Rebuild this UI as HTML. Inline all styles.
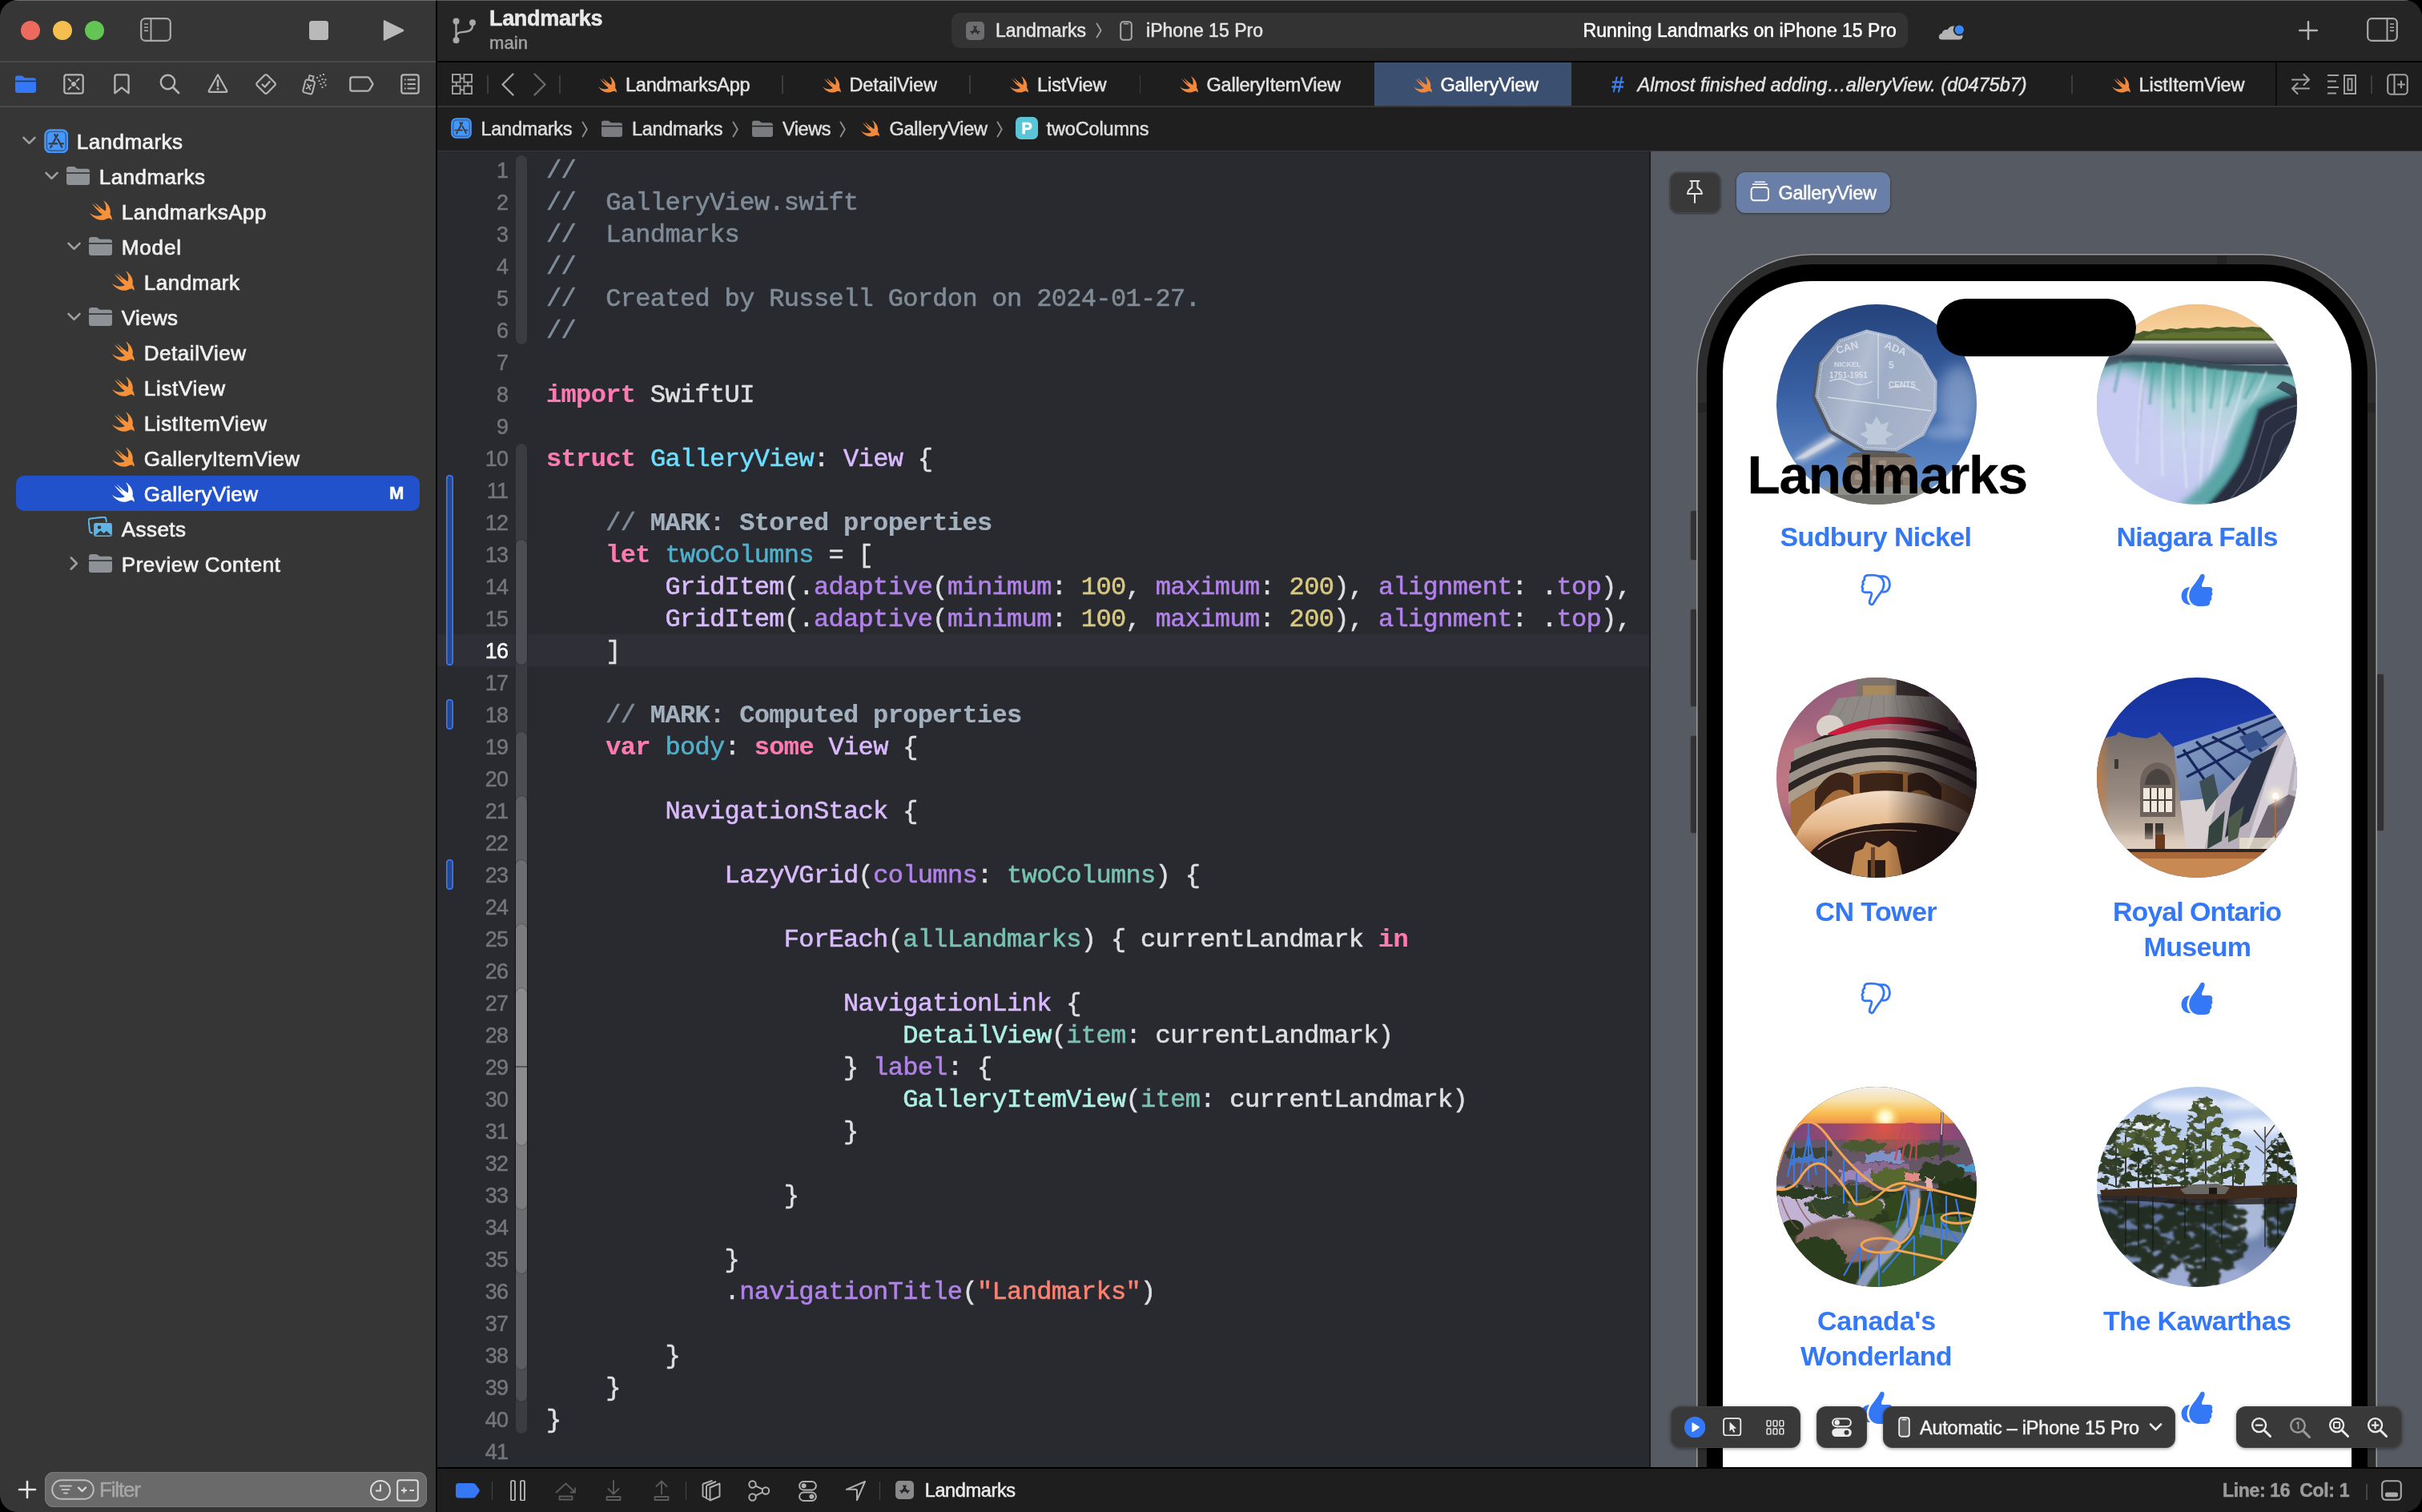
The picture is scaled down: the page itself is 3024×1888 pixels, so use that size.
<!DOCTYPE html>
<html lang="en"><head><meta charset="utf-8"><title>Landmarks — GalleryView.swift</title>
<style>
html,body{margin:0;padding:0;background:#000;}
body{width:3024px;height:1888px;overflow:hidden;font-family:"Liberation Sans",sans-serif;}
#win{position:absolute;left:0;top:0;width:3024px;height:1888px;border-radius:22px;overflow:hidden;background:#1e1e1f;}
#ly{position:absolute;left:0;top:0;width:3024px;height:1888px;will-change:transform;}
.b{position:absolute;display:block;}
.t{position:absolute;white-space:pre;display:block;-webkit-text-stroke:0.5px;}
.code{position:absolute;white-space:pre;font-family:"Liberation Mono",monospace;font-size:32px;letter-spacing:-0.653px;line-height:40px;height:40px;left:682px;color:#dfdfe0;-webkit-text-stroke:0.55px;}
.ln{position:absolute;white-space:pre;text-align:right;width:80px;left:554px;font-size:27px;line-height:40px;height:40px;color:#75757a;letter-spacing:-0.9px;-webkit-text-stroke:0.5px;}
.k{color:#ff7ab2;font-weight:700;-webkit-text-stroke:0.2px}.c{color:#7f8c98}.mk{color:#a3b1bf;font-weight:700;-webkit-text-stroke:0.2px}.td{color:#6bdfff}.od{color:#4eb0cc}
.sc{color:#dabaff}.sf{color:#b281eb}.n{color:#d9c97c}.s{color:#ff8170}.pc{color:#acf2e4}.pv{color:#78c2b3}
</style></head>
<body><div id="win"><div id="ly">
<!-- p_base -->
<div class="b" style="left:0px;top:0px;width:544px;height:1888px;background:#363636;"></div>
<div class="b" style="left:544px;top:0px;width:2px;height:1888px;background:#000;"></div>
<div class="b" style="left:0px;top:76px;width:544px;height:2px;background:#4b4b4b;"></div>
<div class="b" style="left:0px;top:132px;width:544px;height:2px;background:#4b4b4b;"></div>
<div class="b" style="left:546px;top:0px;width:2478px;height:77px;background:#252526;"></div>
<div class="b" style="left:546px;top:76px;width:2478px;height:2px;background:#000;"></div>
<div class="b" style="left:546px;top:78px;width:2478px;height:55px;background:#1e1e1f;"></div>
<div class="b" style="left:546px;top:132px;width:2478px;height:2px;background:#353537;"></div>
<div class="b" style="left:546px;top:134px;width:2478px;height:54px;background:#1f1f20;"></div>
<div class="b" style="left:546px;top:188px;width:2478px;height:1px;background:#38383b;"></div>
<div class="b" style="left:546px;top:189px;width:1513px;height:1644px;background:#292a30;"></div>
<div class="b" style="left:2059px;top:189px;width:2px;height:1644px;background:#1b1b1d;"></div>
<div class="b" style="left:2061px;top:189px;width:963px;height:1644px;background:#565a63;"></div>
<div class="b" style="left:546px;top:1832px;width:2478px;height:2px;background:#000;"></div>
<div class="b" style="left:546px;top:1834px;width:2478px;height:54px;background:#1e1e1f;"></div>
<div class="b" style="left:0px;top:0px;width:3024px;height:1px;background:rgba(255,255,255,0.28);"></div>
<!-- p_sidebar -->
<div class="b" style="left:26px;top:26px;width:24px;height:24px;background:#ed6a5f;border-radius:12px;"></div>
<div class="b" style="left:66px;top:26px;width:24px;height:24px;background:#f5bf4f;border-radius:12px;"></div>
<div class="b" style="left:106px;top:26px;width:24px;height:24px;background:#62c554;border-radius:12px;"></div>
<svg class="b" style="left:175px;top:22px;" width="39" height="30" viewBox="0 0 39 30"><rect x="1.2" y="1.2" width="36.6" height="27.6" rx="5" fill="none" stroke="#a9a9a9" stroke-width="2.2"/><path d="M13.5 1.5V28.5" stroke="#a9a9a9" stroke-width="2"/><path d="M5 8H10M5 12.2H10M5 16.4H10" stroke="#a9a9a9" stroke-width="1.6"/></svg>
<div class="b" style="left:386px;top:26px;width:24px;height:24px;background:#b9b9b9;border-radius:3.5px;"></div>
<svg class="b" style="left:478px;top:24px;" width="28" height="28" viewBox="0 0 28 28"><path d="M2.5 1.5Q0.8 0.6 0.8 2.5V25.5Q0.8 27.4 2.5 26.5L25.6 15.2Q27.2 14 25.6 12.8Z" fill="#b9b9b9"/></svg>
<svg class="b" style="left:19px;top:94px;" width="26" height="22" viewBox="0 0 26 22"><path d="M0 4Q0 0.6 3 0.6H7.4Q9 0.6 10 1.6L10.8 2.4Q11.7 3.2 13 3.2H23Q26 3.2 26 6.2V19Q26 22 23 22H3Q0 22 0 19Z" fill="#3478f6"/><rect x="0" y="6.6" width="26" height="1.6" fill="#363636"/></svg>
<svg class="b" style="left:79px;top:92px;" width="26" height="26" viewBox="0 0 26 26"><rect x="1.3" y="1.3" width="23.4" height="23.4" rx="3" fill="none" stroke="#b4b4b4" stroke-width="2.2"/><circle cx="13" cy="13" r="3" fill="#b4b4b4"/><path d="M6.5 6.5L9.3 9.3M19.5 6.5L16.7 9.3M6.5 19.5L9.3 16.7M19.5 19.5L16.7 16.7" stroke="#b4b4b4" stroke-width="2" stroke-linecap="round"/></svg>
<svg class="b" style="left:142px;top:92px;" width="20" height="26" viewBox="0 0 20 26"><path d="M1.4 3.8Q1.4 1.3 3.9 1.3H16.1Q18.6 1.3 18.6 3.8V24.3L10 17.4L1.4 24.3Z" fill="none" stroke="#b4b4b4" stroke-width="2.3" stroke-linejoin="round"/></svg>
<svg class="b" style="left:199px;top:92px;" width="26" height="26" viewBox="0 0 26 26"><circle cx="10.5" cy="10.5" r="8.7" fill="none" stroke="#b4b4b4" stroke-width="2.4"/><path d="M17 17L24 24" stroke="#b4b4b4" stroke-width="2.8" stroke-linecap="round"/></svg>
<svg class="b" style="left:259px;top:91px;" width="26" height="26" viewBox="0 0 26 26"><path d="M13 2.3L24.2 22.3Q24.8 23.8 23.2 23.8H2.8Q1.2 23.8 1.8 22.3Z" fill="none" stroke="#b4b4b4" stroke-width="2.2" stroke-linejoin="round"/><path d="M13 9.5V16.5" stroke="#b4b4b4" stroke-width="2.6" stroke-linecap="round"/><circle cx="13" cy="20" r="1.5" fill="#b4b4b4"/></svg>
<svg class="b" style="left:318px;top:91px;" width="28" height="28" viewBox="0 0 28 28"><rect x="5" y="5" width="18" height="18" rx="2.5" fill="none" stroke="#b4b4b4" stroke-width="2.2" transform="rotate(45 14 14)"/><path d="M9.5 14.5L12.8 17.6L18.6 11" fill="none" stroke="#b4b4b4" stroke-width="2.3" stroke-linecap="round" stroke-linejoin="round"/></svg>
<svg class="b" style="left:377px;top:91px;" width="31" height="28" viewBox="0 0 31 28"><g transform="rotate(14 10 16)"><rect x="3" y="9.5" width="12" height="16.5" rx="2.5" fill="none" stroke="#b4b4b4" stroke-width="2"/><rect x="6.4" y="3.6" width="5.2" height="5.8" fill="none" stroke="#b4b4b4" stroke-width="1.8"/><path d="M6.6 15L11.4 20.4M11.4 15L6.6 20.4" stroke="#b4b4b4" stroke-width="1.8" stroke-linecap="round"/></g><rect x="18" y="5" width="2" height="2" fill="#b4b4b4"/><rect x="22" y="2.5" width="2" height="2" fill="#b4b4b4"/><rect x="26" y="1" width="2" height="2" fill="#b4b4b4"/><rect x="20.5" y="9" width="2" height="2" fill="#b4b4b4"/><rect x="24.5" y="7" width="2" height="2" fill="#b4b4b4"/><rect x="28.5" y="7.5" width="2" height="2" fill="#b4b4b4"/><rect x="22.5" y="13" width="2" height="2" fill="#b4b4b4"/><rect x="26.5" y="11" width="2" height="2" fill="#b4b4b4"/><rect x="28.5" y="14.5" width="2" height="2" fill="#b4b4b4"/><rect x="24.5" y="17" width="2" height="2" fill="#b4b4b4"/></svg>
<svg class="b" style="left:436px;top:95px;" width="31" height="20" viewBox="0 0 31 20"><path d="M4 1.3H22.5Q24.3 1.3 25.3 2.8L29 8.8Q29.8 10 29 11.2L25.3 17.2Q24.3 18.7 22.5 18.7H4Q1.3 18.7 1.3 16V4Q1.3 1.3 4 1.3Z" fill="none" stroke="#b4b4b4" stroke-width="2.3" stroke-linejoin="round"/></svg>
<svg class="b" style="left:500px;top:92px;" width="24" height="26" viewBox="0 0 24 26"><rect x="1.3" y="1.3" width="21.4" height="23.4" rx="3" fill="none" stroke="#b4b4b4" stroke-width="2.2"/><path d="M9.5 7.5H18M9.5 13H18M9.5 18.5H18" stroke="#b4b4b4" stroke-width="2.2" stroke-linecap="round"/><path d="M5 7.5H6.6M5 13H6.6M5 18.5H6.6" stroke="#b4b4b4" stroke-width="2.2"/></svg>
<svg class="b" style="left:28px;top:170px;" width="17" height="11" viewBox="0 0 17 11"><path d="M1.5 1.8L8.5 8.8L15.5 1.8" fill="none" stroke="#a0a0a0" stroke-width="2.6" stroke-linecap="round" stroke-linejoin="round"/></svg>
<svg class="b" style="left:54.5px;top:160.7px;" width="30.6" height="30.6" viewBox="0 0 30 30"><rect x="0.2" y="0.2" width="29.6" height="29.6" rx="7.6" fill="#4398ff"/><rect x="3.3" y="3.3" width="23.4" height="23.4" rx="4.6" fill="none" stroke="#38598a" stroke-width="1.4"/><g stroke="#3a3a3d" stroke-width="2.2" stroke-linecap="round" fill="none"><path d="M16.6 7L10.9 17.6M9.4 20.6L8 22.6M13 7L14.6 9.6M16.8 12.6L21.9 22.4M6.4 18H16M20.2 18H23.6"/></g></svg>
<span class="t" style="left:95.8px;top:158.8px;font-size:26px;line-height:36px;color:#f0f0f0;letter-spacing:0.453px;-webkit-text-stroke:0.7px;">Landmarks</span>
<svg class="b" style="left:56px;top:214px;" width="17" height="11" viewBox="0 0 17 11"><path d="M1.5 1.8L8.5 8.8L15.5 1.8" fill="none" stroke="#a0a0a0" stroke-width="2.6" stroke-linecap="round" stroke-linejoin="round"/></svg>
<svg class="b" style="left:83px;top:207px;" width="29" height="24" viewBox="0 0 29 24"><path d="M0 4.2Q0 1 3.2 1H8.6Q10.4 1 11.4 2.1L12.3 3Q13.2 3.8 14.6 3.8H25.8Q29 3.8 29 7V20.8Q29 24 25.8 24H3.2Q0 24 0 20.8Z" fill="#8e9297"/><rect x="0" y="8.2" width="29" height="1.7" fill="#363636"/></svg>
<span class="t" style="left:123.8px;top:202.8px;font-size:26px;line-height:36px;color:#f0f0f0;letter-spacing:0.453px;-webkit-text-stroke:0.7px;">Landmarks</span>
<svg class="b" style="left:111px;top:250px;" width="30" height="26" viewBox="2.3 3.3 18.5 17"><path d="M13.543 3.41c4.114 2.47 6.545 7.162 5.549 11.131-.024.093-.05.181-.076.272l.002.001c2.062 2.538 1.5 5.258 1.236 4.745-1.072-2.086-3.066-1.568-4.088-1.043a6.803 6.803 0 0 1-.281.158l-.02.012-.002.002c-2.115 1.123-4.957 1.205-7.812-.022a12.568 12.568 0 0 1-5.64-4.838c.649.48 1.35.902 2.097 1.252 3.019 1.414 6.051 1.311 8.197-.002C9.651 12.73 7.101 9.67 5.146 7.191a10.628 10.628 0 0 1-1.005-1.384c2.34 2.142 6.038 4.83 7.365 5.576C8.69 8.408 6.208 4.743 6.324 4.86c4.436 4.47 8.528 6.996 8.528 6.996.154.085.27.154.36.213.085-.215.16-.437.224-.668.708-2.588-.09-5.548-1.893-7.992z" fill="#f6923a"/></svg>
<span class="t" style="left:151.8px;top:246.8px;font-size:26px;line-height:36px;color:#f0f0f0;letter-spacing:0.534px;-webkit-text-stroke:0.7px;">LandmarksApp</span>
<svg class="b" style="left:84px;top:302px;" width="17" height="11" viewBox="0 0 17 11"><path d="M1.5 1.8L8.5 8.8L15.5 1.8" fill="none" stroke="#a0a0a0" stroke-width="2.6" stroke-linecap="round" stroke-linejoin="round"/></svg>
<svg class="b" style="left:111px;top:295px;" width="29" height="24" viewBox="0 0 29 24"><path d="M0 4.2Q0 1 3.2 1H8.6Q10.4 1 11.4 2.1L12.3 3Q13.2 3.8 14.6 3.8H25.8Q29 3.8 29 7V20.8Q29 24 25.8 24H3.2Q0 24 0 20.8Z" fill="#8e9297"/><rect x="0" y="8.2" width="29" height="1.7" fill="#363636"/></svg>
<span class="t" style="left:151.8px;top:290.8px;font-size:26px;line-height:36px;color:#f0f0f0;letter-spacing:0.851px;-webkit-text-stroke:0.7px;">Model</span>
<svg class="b" style="left:139px;top:338px;" width="30" height="26" viewBox="2.3 3.3 18.5 17"><path d="M13.543 3.41c4.114 2.47 6.545 7.162 5.549 11.131-.024.093-.05.181-.076.272l.002.001c2.062 2.538 1.5 5.258 1.236 4.745-1.072-2.086-3.066-1.568-4.088-1.043a6.803 6.803 0 0 1-.281.158l-.02.012-.002.002c-2.115 1.123-4.957 1.205-7.812-.022a12.568 12.568 0 0 1-5.64-4.838c.649.48 1.35.902 2.097 1.252 3.019 1.414 6.051 1.311 8.197-.002C9.651 12.73 7.101 9.67 5.146 7.191a10.628 10.628 0 0 1-1.005-1.384c2.34 2.142 6.038 4.83 7.365 5.576C8.69 8.408 6.208 4.743 6.324 4.86c4.436 4.47 8.528 6.996 8.528 6.996.154.085.27.154.36.213.085-.215.16-.437.224-.668.708-2.588-.09-5.548-1.893-7.992z" fill="#f6923a"/></svg>
<span class="t" style="left:179.8px;top:334.8px;font-size:26px;line-height:36px;color:#f0f0f0;letter-spacing:0.517px;-webkit-text-stroke:0.7px;">Landmark</span>
<svg class="b" style="left:84px;top:390px;" width="17" height="11" viewBox="0 0 17 11"><path d="M1.5 1.8L8.5 8.8L15.5 1.8" fill="none" stroke="#a0a0a0" stroke-width="2.6" stroke-linecap="round" stroke-linejoin="round"/></svg>
<svg class="b" style="left:111px;top:383px;" width="29" height="24" viewBox="0 0 29 24"><path d="M0 4.2Q0 1 3.2 1H8.6Q10.4 1 11.4 2.1L12.3 3Q13.2 3.8 14.6 3.8H25.8Q29 3.8 29 7V20.8Q29 24 25.8 24H3.2Q0 24 0 20.8Z" fill="#8e9297"/><rect x="0" y="8.2" width="29" height="1.7" fill="#363636"/></svg>
<span class="t" style="left:151.8px;top:378.8px;font-size:26px;line-height:36px;color:#f0f0f0;letter-spacing:0.327px;-webkit-text-stroke:0.7px;">Views</span>
<svg class="b" style="left:139px;top:426px;" width="30" height="26" viewBox="2.3 3.3 18.5 17"><path d="M13.543 3.41c4.114 2.47 6.545 7.162 5.549 11.131-.024.093-.05.181-.076.272l.002.001c2.062 2.538 1.5 5.258 1.236 4.745-1.072-2.086-3.066-1.568-4.088-1.043a6.803 6.803 0 0 1-.281.158l-.02.012-.002.002c-2.115 1.123-4.957 1.205-7.812-.022a12.568 12.568 0 0 1-5.64-4.838c.649.48 1.35.902 2.097 1.252 3.019 1.414 6.051 1.311 8.197-.002C9.651 12.73 7.101 9.67 5.146 7.191a10.628 10.628 0 0 1-1.005-1.384c2.34 2.142 6.038 4.83 7.365 5.576C8.69 8.408 6.208 4.743 6.324 4.86c4.436 4.47 8.528 6.996 8.528 6.996.154.085.27.154.36.213.085-.215.16-.437.224-.668.708-2.588-.09-5.548-1.893-7.992z" fill="#f6923a"/></svg>
<span class="t" style="left:179.8px;top:422.8px;font-size:26px;line-height:36px;color:#f0f0f0;letter-spacing:0.538px;-webkit-text-stroke:0.7px;">DetailView</span>
<svg class="b" style="left:139px;top:470px;" width="30" height="26" viewBox="2.3 3.3 18.5 17"><path d="M13.543 3.41c4.114 2.47 6.545 7.162 5.549 11.131-.024.093-.05.181-.076.272l.002.001c2.062 2.538 1.5 5.258 1.236 4.745-1.072-2.086-3.066-1.568-4.088-1.043a6.803 6.803 0 0 1-.281.158l-.02.012-.002.002c-2.115 1.123-4.957 1.205-7.812-.022a12.568 12.568 0 0 1-5.64-4.838c.649.48 1.35.902 2.097 1.252 3.019 1.414 6.051 1.311 8.197-.002C9.651 12.73 7.101 9.67 5.146 7.191a10.628 10.628 0 0 1-1.005-1.384c2.34 2.142 6.038 4.83 7.365 5.576C8.69 8.408 6.208 4.743 6.324 4.86c4.436 4.47 8.528 6.996 8.528 6.996.154.085.27.154.36.213.085-.215.16-.437.224-.668.708-2.588-.09-5.548-1.893-7.992z" fill="#f6923a"/></svg>
<span class="t" style="left:179.8px;top:466.8px;font-size:26px;line-height:36px;color:#f0f0f0;letter-spacing:0.694px;-webkit-text-stroke:0.7px;">ListView</span>
<svg class="b" style="left:139px;top:514px;" width="30" height="26" viewBox="2.3 3.3 18.5 17"><path d="M13.543 3.41c4.114 2.47 6.545 7.162 5.549 11.131-.024.093-.05.181-.076.272l.002.001c2.062 2.538 1.5 5.258 1.236 4.745-1.072-2.086-3.066-1.568-4.088-1.043a6.803 6.803 0 0 1-.281.158l-.02.012-.002.002c-2.115 1.123-4.957 1.205-7.812-.022a12.568 12.568 0 0 1-5.64-4.838c.649.48 1.35.902 2.097 1.252 3.019 1.414 6.051 1.311 8.197-.002C9.651 12.73 7.101 9.67 5.146 7.191a10.628 10.628 0 0 1-1.005-1.384c2.34 2.142 6.038 4.83 7.365 5.576C8.69 8.408 6.208 4.743 6.324 4.86c4.436 4.47 8.528 6.996 8.528 6.996.154.085.27.154.36.213.085-.215.16-.437.224-.668.708-2.588-.09-5.548-1.893-7.992z" fill="#f6923a"/></svg>
<span class="t" style="left:179.8px;top:510.8px;font-size:26px;line-height:36px;color:#f0f0f0;letter-spacing:0.574px;-webkit-text-stroke:0.7px;">ListItemView</span>
<svg class="b" style="left:139px;top:558px;" width="30" height="26" viewBox="2.3 3.3 18.5 17"><path d="M13.543 3.41c4.114 2.47 6.545 7.162 5.549 11.131-.024.093-.05.181-.076.272l.002.001c2.062 2.538 1.5 5.258 1.236 4.745-1.072-2.086-3.066-1.568-4.088-1.043a6.803 6.803 0 0 1-.281.158l-.02.012-.002.002c-2.115 1.123-4.957 1.205-7.812-.022a12.568 12.568 0 0 1-5.64-4.838c.649.48 1.35.902 2.097 1.252 3.019 1.414 6.051 1.311 8.197-.002C9.651 12.73 7.101 9.67 5.146 7.191a10.628 10.628 0 0 1-1.005-1.384c2.34 2.142 6.038 4.83 7.365 5.576C8.69 8.408 6.208 4.743 6.324 4.86c4.436 4.47 8.528 6.996 8.528 6.996.154.085.27.154.36.213.085-.215.16-.437.224-.668.708-2.588-.09-5.548-1.893-7.992z" fill="#f6923a"/></svg>
<span class="t" style="left:179.8px;top:554.8px;font-size:26px;line-height:36px;color:#f0f0f0;letter-spacing:0.387px;-webkit-text-stroke:0.7px;">GalleryItemView</span>
<div class="b" style="left:20px;top:594px;width:504px;height:44px;background:#2251cc;border-radius:10px;"></div>
<svg class="b" style="left:139px;top:602px;" width="30" height="26" viewBox="2.3 3.3 18.5 17"><path d="M13.543 3.41c4.114 2.47 6.545 7.162 5.549 11.131-.024.093-.05.181-.076.272l.002.001c2.062 2.538 1.5 5.258 1.236 4.745-1.072-2.086-3.066-1.568-4.088-1.043a6.803 6.803 0 0 1-.281.158l-.02.012-.002.002c-2.115 1.123-4.957 1.205-7.812-.022a12.568 12.568 0 0 1-5.64-4.838c.649.48 1.35.902 2.097 1.252 3.019 1.414 6.051 1.311 8.197-.002C9.651 12.73 7.101 9.67 5.146 7.191a10.628 10.628 0 0 1-1.005-1.384c2.34 2.142 6.038 4.83 7.365 5.576C8.69 8.408 6.208 4.743 6.324 4.86c4.436 4.47 8.528 6.996 8.528 6.996.154.085.27.154.36.213.085-.215.16-.437.224-.668.708-2.588-.09-5.548-1.893-7.992z" fill="#fff"/></svg>
<span class="t" style="left:179.8px;top:598.8px;font-size:26px;line-height:36px;color:#fff;letter-spacing:0.397px;-webkit-text-stroke:0.7px;">GalleryView</span>
<svg class="b" style="left:110px;top:645px;" width="32" height="27" viewBox="0 0 32 27"><rect x="1.2" y="1.6" width="22" height="18" rx="3" fill="none" stroke="#5fb6e6" stroke-width="2" transform="rotate(-7 12 10)"/><rect x="6.5" y="7.5" width="24" height="18" rx="3" fill="#5fb6e6" stroke="#363636" stroke-width="1.2"/><circle cx="14" cy="13.5" r="2.3" fill="#363636"/><path d="M9 23.5L15.5 17.5L19.5 21L23 18L29 23.5Z" fill="#363636"/></svg>
<span class="t" style="left:151.8px;top:642.8px;font-size:26px;line-height:36px;color:#f0f0f0;letter-spacing:0.437px;-webkit-text-stroke:0.7px;">Assets</span>
<svg class="b" style="left:87px;top:695px;" width="11" height="17" viewBox="0 0 11 17"><path d="M1.8 1.5L8.8 8.5L1.8 15.5" fill="none" stroke="#a0a0a0" stroke-width="2.6" stroke-linecap="round" stroke-linejoin="round"/></svg>
<svg class="b" style="left:111px;top:691px;" width="29" height="24" viewBox="0 0 29 24"><path d="M0 4.2Q0 1 3.2 1H8.6Q10.4 1 11.4 2.1L12.3 3Q13.2 3.8 14.6 3.8H25.8Q29 3.8 29 7V20.8Q29 24 25.8 24H3.2Q0 24 0 20.8Z" fill="#8e9297"/><rect x="0" y="8.2" width="29" height="1.7" fill="#363636"/></svg>
<span class="t" style="left:151.8px;top:686.8px;font-size:26px;line-height:36px;color:#f0f0f0;letter-spacing:0.534px;-webkit-text-stroke:0.7px;">Preview Content</span>
<span class="t" style="left:486.0px;top:601.0px;font-size:22px;line-height:30px;color:#fff;font-weight:700;">M</span>
<svg class="b" style="left:22px;top:1848px;" width="24" height="24" viewBox="0 0 24 24"><path d="M12 2V22M2 12H22" stroke="#e6e6e6" stroke-width="2.6" stroke-linecap="round"/></svg>
<div class="b" style="left:56px;top:1838px;width:477px;height:44px;background:#6a6a6a;border-radius:11px;box-shadow:inset 0 0 0 1px #7a7a7a;"></div>
<svg class="b" style="left:64px;top:1847px;" width="54" height="26" viewBox="0 0 54 26"><rect x="1.2" y="1.2" width="51.6" height="23.6" rx="11.8" fill="none" stroke="#bdbdbd" stroke-width="2"/><path d="M11 8.5H25M13.5 13H22.5M16 17.5H20" stroke="#bdbdbd" stroke-width="2" stroke-linecap="round"/><path d="M34 10.5L38.5 15L43 10.5" fill="none" stroke="#d8d8d8" stroke-width="2.4" stroke-linecap="round" stroke-linejoin="round"/></svg>
<span class="t" style="left:124.0px;top:1842.0px;font-size:26px;line-height:36px;color:#a6a6a6;letter-spacing:-1.153px;">Filter</span>
<svg class="b" style="left:461px;top:1847px;" width="28" height="28" viewBox="0 0 28 28"><circle cx="14" cy="14" r="12" fill="none" stroke="#dcdcdc" stroke-width="2"/><path d="M14 6.5V14.5H8" fill="none" stroke="#dcdcdc" stroke-width="2"/></svg>
<svg class="b" style="left:495px;top:1847px;" width="28" height="28" viewBox="0 0 28 28"><rect x="1.2" y="1.2" width="25.6" height="25.6" rx="3" fill="none" stroke="#dcdcdc" stroke-width="2"/><path d="M6 14H13M9.5 10.5V17.5M16.5 14H22" stroke="#dcdcdc" stroke-width="2"/></svg>
<!-- p_toolbar -->
<svg class="b" style="left:565px;top:22px;" width="30" height="33" viewBox="0 0 30 33"><g fill="none" stroke="#a8a8a8" stroke-width="2.4"><path d="M4.5 7V26"/><path d="M25 8.5V10Q25 16.5 17 17.5L10 18.4Q4.5 19.4 4.5 24"/></g><circle cx="4.5" cy="4.5" r="4" fill="#a8a8a8"/><circle cx="4.5" cy="28.3" r="4" fill="#a8a8a8"/><circle cx="25" cy="6.2" r="4" fill="#a8a8a8"/></svg>
<span class="t" style="left:611.0px;top:6.0px;font-size:27px;line-height:34px;color:#e9e9e9;letter-spacing:-0.320px;font-weight:700;">Landmarks</span>
<span class="t" style="left:611.0px;top:39.5px;font-size:22px;line-height:28px;color:#a3a3a3;letter-spacing:0.104px;">main</span>
<div class="b" style="left:1188px;top:16px;width:1194px;height:44px;background:#333334;border-radius:11px;"></div>
<svg class="b" style="left:1206px;top:27px;" width="23" height="23" viewBox="0 0 23 23"><rect x="0" y="0" width="23" height="23" rx="5" fill="#6d6d6f"/><g stroke="#2c2c2e" stroke-width="1.9" stroke-linecap="round" fill="none"><path d="M10.2 6.2L15 14.8M12.8 6.2L8 14.8M6.2 12.6H16.8"/></g></svg>
<span class="t" style="left:1243.0px;top:23.0px;font-size:23px;line-height:30px;color:#e4e4e4;letter-spacing:-0.100px;">Landmarks</span>
<svg class="b" style="left:1368px;top:28px;" width="9" height="20" viewBox="0 0 9 20"><path d="M1.5 1.5L6.6 10L1.5 18.5" fill="none" stroke="#9a9a9a" stroke-width="1.9" stroke-linecap="round" stroke-linejoin="round"/></svg>
<svg class="b" style="left:1398px;top:26px;" width="16" height="25" viewBox="0 0 16 25"><rect x="1.2" y="1.2" width="13.6" height="22.6" rx="3.4" fill="none" stroke="#a9a9a9" stroke-width="2"/><path d="M5.5 3.8H10.5" stroke="#a9a9a9" stroke-width="1.6" stroke-linecap="round"/></svg>
<span class="t" style="left:1431.0px;top:23.0px;font-size:23px;line-height:30px;color:#e4e4e4;letter-spacing:0.016px;">iPhone 15 Pro</span>
<span class="t" style="left:1976.5px;top:23.0px;font-size:23px;line-height:30px;color:#fff;letter-spacing:0.043px;">Running Landmarks on iPhone 15 Pro</span>
<svg class="b" style="left:2420px;top:27px;" width="36" height="24" viewBox="0 0 36 24"><path d="M8 22.5H25.5Q30.5 22.5 30.5 18Q30.5 14.6 27 13.6Q26.6 5.5 19 5.5Q14 5.5 11.8 10Q5.5 9.5 4.6 14.8Q0.8 15.6 0.8 19Q0.8 22.5 5 22.5Z" fill="#b4b4b4"/><circle cx="26.3" cy="10.2" r="7.6" fill="#252526"/><circle cx="26.3" cy="10.2" r="5.6" fill="#3a86f7"/></svg>
<svg class="b" style="left:2870px;top:26px;" width="24" height="24" viewBox="0 0 24 24"><path d="M12 1.2V22.8M1.2 12H22.8" stroke="#b4b4b4" stroke-width="2.5" stroke-linecap="round"/></svg>
<svg class="b" style="left:2954.5px;top:22px;" width="39" height="30" viewBox="0 0 39 30"><rect x="1.2" y="1.2" width="36.6" height="27.6" rx="5" fill="none" stroke="#a9a9a9" stroke-width="2.2"/><path d="M25.5 1.5V28.5" stroke="#a9a9a9" stroke-width="2"/><path d="M29 8H34M29 12.2H34M29 16.4H34" stroke="#a9a9a9" stroke-width="1.6"/></svg>
<!-- p_tabs -->
<svg class="b" style="left:564px;top:92px;" width="26" height="26" viewBox="0 0 26 26"><g fill="none" stroke="#a0a0a0" stroke-width="2" transform="scale(0.963)"><rect x="1" y="1" width="10" height="10"/><rect x="16" y="1" width="10" height="10"/><rect x="1" y="16" width="10" height="10"/><rect x="16" y="16" width="10" height="10"/><path d="M11 6H16M6 11V16M21 11V16M11 21H16"/></g></svg>
<div class="b" style="left:608.25px;top:94px;width:1.5px;height:23px;background:#3d3d3f;"></div>
<div class="b" style="left:698.25px;top:94px;width:1.5px;height:23px;background:#3d3d3f;"></div>
<svg class="b" style="left:625px;top:91px;" width="18" height="29" viewBox="0 0 18 29"><path d="M15.5 1.5L2.5 14.5L15.5 27.5" fill="none" stroke="#a6a6a6" stroke-width="2.4" stroke-linecap="round" stroke-linejoin="round"/></svg>
<svg class="b" style="left:665px;top:91px;" width="18" height="29" viewBox="0 0 18 29"><path d="M2.5 1.5L15.5 14.5L2.5 27.5" fill="none" stroke="#6b6b6b" stroke-width="2.4" stroke-linecap="round" stroke-linejoin="round"/></svg>
<div class="b" style="left:1716px;top:78px;width:246px;height:54px;background:#3b5071;"></div>
<svg class="b" style="left:745.5px;top:95px;" width="25" height="21.5" viewBox="2.3 3.3 18.5 17"><path d="M13.543 3.41c4.114 2.47 6.545 7.162 5.549 11.131-.024.093-.05.181-.076.272l.002.001c2.062 2.538 1.5 5.258 1.236 4.745-1.072-2.086-3.066-1.568-4.088-1.043a6.803 6.803 0 0 1-.281.158l-.02.012-.002.002c-2.115 1.123-4.957 1.205-7.812-.022a12.568 12.568 0 0 1-5.64-4.838c.649.48 1.35.902 2.097 1.252 3.019 1.414 6.051 1.311 8.197-.002C9.651 12.73 7.101 9.67 5.146 7.191a10.628 10.628 0 0 1-1.005-1.384c2.34 2.142 6.038 4.83 7.365 5.576C8.69 8.408 6.208 4.743 6.324 4.86c4.436 4.47 8.528 6.996 8.528 6.996.154.085.27.154.36.213.085-.215.16-.437.224-.668.708-2.588-.09-5.548-1.893-7.992z" fill="#f0883e"/></svg>
<span class="t" style="left:781.0px;top:90.5px;font-size:23.5px;line-height:30px;color:#e2e2e2;letter-spacing:-0.229px;">LandmarksApp</span>
<svg class="b" style="left:1025.5px;top:95px;" width="25" height="21.5" viewBox="2.3 3.3 18.5 17"><path d="M13.543 3.41c4.114 2.47 6.545 7.162 5.549 11.131-.024.093-.05.181-.076.272l.002.001c2.062 2.538 1.5 5.258 1.236 4.745-1.072-2.086-3.066-1.568-4.088-1.043a6.803 6.803 0 0 1-.281.158l-.02.012-.002.002c-2.115 1.123-4.957 1.205-7.812-.022a12.568 12.568 0 0 1-5.64-4.838c.649.48 1.35.902 2.097 1.252 3.019 1.414 6.051 1.311 8.197-.002C9.651 12.73 7.101 9.67 5.146 7.191a10.628 10.628 0 0 1-1.005-1.384c2.34 2.142 6.038 4.83 7.365 5.576C8.69 8.408 6.208 4.743 6.324 4.86c4.436 4.47 8.528 6.996 8.528 6.996.154.085.27.154.36.213.085-.215.16-.437.224-.668.708-2.588-.09-5.548-1.893-7.992z" fill="#f0883e"/></svg>
<span class="t" style="left:1060.5px;top:90.5px;font-size:23.5px;line-height:30px;color:#e2e2e2;letter-spacing:-0.118px;">DetailView</span>
<svg class="b" style="left:1260px;top:95px;" width="25" height="21.5" viewBox="2.3 3.3 18.5 17"><path d="M13.543 3.41c4.114 2.47 6.545 7.162 5.549 11.131-.024.093-.05.181-.076.272l.002.001c2.062 2.538 1.5 5.258 1.236 4.745-1.072-2.086-3.066-1.568-4.088-1.043a6.803 6.803 0 0 1-.281.158l-.02.012-.002.002c-2.115 1.123-4.957 1.205-7.812-.022a12.568 12.568 0 0 1-5.64-4.838c.649.48 1.35.902 2.097 1.252 3.019 1.414 6.051 1.311 8.197-.002C9.651 12.73 7.101 9.67 5.146 7.191a10.628 10.628 0 0 1-1.005-1.384c2.34 2.142 6.038 4.83 7.365 5.576C8.69 8.408 6.208 4.743 6.324 4.86c4.436 4.47 8.528 6.996 8.528 6.996.154.085.27.154.36.213.085-.215.16-.437.224-.668.708-2.588-.09-5.548-1.893-7.992z" fill="#f0883e"/></svg>
<span class="t" style="left:1295.0px;top:90.5px;font-size:23.5px;line-height:30px;color:#e2e2e2;letter-spacing:-0.080px;">ListView</span>
<svg class="b" style="left:1471.5px;top:95px;" width="25" height="21.5" viewBox="2.3 3.3 18.5 17"><path d="M13.543 3.41c4.114 2.47 6.545 7.162 5.549 11.131-.024.093-.05.181-.076.272l.002.001c2.062 2.538 1.5 5.258 1.236 4.745-1.072-2.086-3.066-1.568-4.088-1.043a6.803 6.803 0 0 1-.281.158l-.02.012-.002.002c-2.115 1.123-4.957 1.205-7.812-.022a12.568 12.568 0 0 1-5.64-4.838c.649.48 1.35.902 2.097 1.252 3.019 1.414 6.051 1.311 8.197-.002C9.651 12.73 7.101 9.67 5.146 7.191a10.628 10.628 0 0 1-1.005-1.384c2.34 2.142 6.038 4.83 7.365 5.576C8.69 8.408 6.208 4.743 6.324 4.86c4.436 4.47 8.528 6.996 8.528 6.996.154.085.27.154.36.213.085-.215.16-.437.224-.668.708-2.588-.09-5.548-1.893-7.992z" fill="#f0883e"/></svg>
<span class="t" style="left:1506.5px;top:90.5px;font-size:23.5px;line-height:30px;color:#e2e2e2;letter-spacing:-0.223px;">GalleryItemView</span>
<svg class="b" style="left:1764px;top:95px;" width="25" height="21.5" viewBox="2.3 3.3 18.5 17"><path d="M13.543 3.41c4.114 2.47 6.545 7.162 5.549 11.131-.024.093-.05.181-.076.272l.002.001c2.062 2.538 1.5 5.258 1.236 4.745-1.072-2.086-3.066-1.568-4.088-1.043a6.803 6.803 0 0 1-.281.158l-.02.012-.002.002c-2.115 1.123-4.957 1.205-7.812-.022a12.568 12.568 0 0 1-5.64-4.838c.649.48 1.35.902 2.097 1.252 3.019 1.414 6.051 1.311 8.197-.002C9.651 12.73 7.101 9.67 5.146 7.191a10.628 10.628 0 0 1-1.005-1.384c2.34 2.142 6.038 4.83 7.365 5.576C8.69 8.408 6.208 4.743 6.324 4.86c4.436 4.47 8.528 6.996 8.528 6.996.154.085.27.154.36.213.085-.215.16-.437.224-.668.708-2.588-.09-5.548-1.893-7.992z" fill="#f0883e"/></svg>
<span class="t" style="left:1798.5px;top:90.5px;font-size:23.5px;line-height:30px;color:#fff;letter-spacing:-0.242px;">GalleryView</span>
<svg class="b" style="left:2636px;top:95px;" width="25" height="21.5" viewBox="2.3 3.3 18.5 17"><path d="M13.543 3.41c4.114 2.47 6.545 7.162 5.549 11.131-.024.093-.05.181-.076.272l.002.001c2.062 2.538 1.5 5.258 1.236 4.745-1.072-2.086-3.066-1.568-4.088-1.043a6.803 6.803 0 0 1-.281.158l-.02.012-.002.002c-2.115 1.123-4.957 1.205-7.812-.022a12.568 12.568 0 0 1-5.64-4.838c.649.48 1.35.902 2.097 1.252 3.019 1.414 6.051 1.311 8.197-.002C9.651 12.73 7.101 9.67 5.146 7.191a10.628 10.628 0 0 1-1.005-1.384c2.34 2.142 6.038 4.83 7.365 5.576C8.69 8.408 6.208 4.743 6.324 4.86c4.436 4.47 8.528 6.996 8.528 6.996.154.085.27.154.36.213.085-.215.16-.437.224-.668.708-2.588-.09-5.548-1.893-7.992z" fill="#f0883e"/></svg>
<span class="t" style="left:2670.5px;top:90.5px;font-size:23.5px;line-height:30px;color:#e2e2e2;letter-spacing:-0.070px;">ListItemView</span>
<div class="b" style="left:976.25px;top:94px;width:1.5px;height:23px;background:#3d3d3f;"></div>
<div class="b" style="left:1210.25px;top:94px;width:1.5px;height:23px;background:#3d3d3f;"></div>
<div class="b" style="left:1422.55px;top:94px;width:1.5px;height:23px;background:#3d3d3f;"></div>
<div class="b" style="left:2586.05px;top:94px;width:1.5px;height:23px;background:#3d3d3f;"></div>
<span class="t" style="left:2012.0px;top:90.5px;font-size:27px;line-height:30px;color:#3a82f7;font-style:italic;">#</span>
<span class="t" style="left:2044.5px;top:90.5px;font-size:23.5px;line-height:30px;color:#e2e2e2;letter-spacing:0.015px;font-style:italic;">Almost finished adding…alleryView. (d0475b7)</span>
<div class="b" style="left:2841px;top:78px;width:2px;height:54px;background:#0c0c0d;"></div>
<svg class="b" style="left:2859px;top:91px;" width="27" height="28" viewBox="0 0 27 28"><g fill="none" stroke="#a0a0a0" stroke-width="2.1" stroke-linecap="round" stroke-linejoin="round"><path d="M3 8.5H24M17.5 2L24 8.5L17.5 15"/><path d="M24 19.5H3M9.5 13L3 19.5L9.5 26"/></g></svg>
<svg class="b" style="left:2905px;top:92px;" width="38" height="27" viewBox="0 0 38 27"><g fill="none" stroke="#a0a0a0" stroke-width="2"><path d="M1 2H15M1 9.5H12M1 17H15M1 24.5H12"/><rect x="22" y="2" width="14" height="23"/><rect x="26.5" y="6.5" width="5" height="14"/></g></svg>
<div class="b" style="left:2960px;top:94px;width:1.5px;height:23px;background:#3d3d3f;"></div>
<svg class="b" style="left:2979.5px;top:92px;" width="27" height="27" viewBox="0 0 27 27"><g fill="none" stroke="#a0a0a0" stroke-width="2.1"><rect x="1.2" y="1.2" width="24.6" height="24.6" rx="4"/><path d="M9.5 1.5V25.5"/><path d="M14 13.5H22M18 9.5V17.5" stroke-linecap="round"/></g></svg>
<svg class="b" style="left:562.5px;top:147px;" width="26" height="26" viewBox="0 0 30 30"><rect x="0.2" y="0.2" width="29.6" height="29.6" rx="7.6" fill="#4398ff"/><rect x="3.3" y="3.3" width="23.4" height="23.4" rx="4.6" fill="none" stroke="#38598a" stroke-width="1.4"/><g stroke="#3a3a3d" stroke-width="2.2" stroke-linecap="round" fill="none"><path d="M16.6 7L10.9 17.6M9.4 20.6L8 22.6M13 7L14.6 9.6M16.8 12.6L21.9 22.4M6.4 18H16M20.2 18H23.6"/></g></svg>
<span class="t" style="left:600.5px;top:146.0px;font-size:23.5px;line-height:30px;color:#dedede;letter-spacing:-0.277px;">Landmarks</span>
<svg class="b" style="left:725.5px;top:151px;" width="9" height="21" viewBox="0 0 9 21"><path d="M1.5 1.5L6.8 10.5L1.5 19.5" fill="none" stroke="#8c8c8c" stroke-width="1.9" stroke-linecap="round" stroke-linejoin="round"/></svg>
<svg class="b" style="left:751px;top:149.5px;" width="26" height="21" viewBox="0 0 26 21"><path d="M0 3.8Q0 0.8 3 0.8H7.6Q9.2 0.8 10.1 1.8L10.9 2.6Q11.7 3.3 13 3.3H23Q26 3.3 26 6.3V18Q26 21 23 21H3Q0 21 0 18Z" fill="#7a7c80"/><rect x="0" y="6.8" width="26" height="1.5" fill="#1f1f21"/></svg>
<span class="t" style="left:789.0px;top:146.0px;font-size:23.5px;line-height:30px;color:#dedede;letter-spacing:-0.340px;">Landmarks</span>
<svg class="b" style="left:913.5px;top:151px;" width="9" height="21" viewBox="0 0 9 21"><path d="M1.5 1.5L6.8 10.5L1.5 19.5" fill="none" stroke="#8c8c8c" stroke-width="1.9" stroke-linecap="round" stroke-linejoin="round"/></svg>
<svg class="b" style="left:939px;top:149.5px;" width="26" height="21" viewBox="0 0 26 21"><path d="M0 3.8Q0 0.8 3 0.8H7.6Q9.2 0.8 10.1 1.8L10.9 2.6Q11.7 3.3 13 3.3H23Q26 3.3 26 6.3V18Q26 21 23 21H3Q0 21 0 18Z" fill="#7a7c80"/><rect x="0" y="6.8" width="26" height="1.5" fill="#1f1f21"/></svg>
<span class="t" style="left:977.0px;top:146.0px;font-size:23.5px;line-height:30px;color:#dedede;letter-spacing:-0.438px;">Views</span>
<svg class="b" style="left:1047.5px;top:151px;" width="9" height="21" viewBox="0 0 9 21"><path d="M1.5 1.5L6.8 10.5L1.5 19.5" fill="none" stroke="#8c8c8c" stroke-width="1.9" stroke-linecap="round" stroke-linejoin="round"/></svg>
<svg class="b" style="left:1073.5px;top:150px;" width="25" height="21.5" viewBox="2.3 3.3 18.5 17"><path d="M13.543 3.41c4.114 2.47 6.545 7.162 5.549 11.131-.024.093-.05.181-.076.272l.002.001c2.062 2.538 1.5 5.258 1.236 4.745-1.072-2.086-3.066-1.568-4.088-1.043a6.803 6.803 0 0 1-.281.158l-.02.012-.002.002c-2.115 1.123-4.957 1.205-7.812-.022a12.568 12.568 0 0 1-5.64-4.838c.649.48 1.35.902 2.097 1.252 3.019 1.414 6.051 1.311 8.197-.002C9.651 12.73 7.101 9.67 5.146 7.191a10.628 10.628 0 0 1-1.005-1.384c2.34 2.142 6.038 4.83 7.365 5.576C8.69 8.408 6.208 4.743 6.324 4.86c4.436 4.47 8.528 6.996 8.528 6.996.154.085.27.154.36.213.085-.215.16-.437.224-.668.708-2.588-.09-5.548-1.893-7.992z" fill="#f0883e"/></svg>
<span class="t" style="left:1110.5px;top:146.0px;font-size:23.5px;line-height:30px;color:#dedede;letter-spacing:-0.242px;">GalleryView</span>
<svg class="b" style="left:1243.5px;top:151px;" width="9" height="21" viewBox="0 0 9 21"><path d="M1.5 1.5L6.8 10.5L1.5 19.5" fill="none" stroke="#8c8c8c" stroke-width="1.9" stroke-linecap="round" stroke-linejoin="round"/></svg>
<div class="b" style="left:1268px;top:146px;width:28px;height:27.5px;background:#5bc4d6;border-radius:6.5px;"></div>
<span class="t" style="left:1275.5px;top:147.0px;font-size:20px;line-height:26px;color:#fff;font-weight:700;">P</span>
<span class="t" style="left:1306.5px;top:146.0px;font-size:23.5px;line-height:30px;color:#dedede;letter-spacing:-0.141px;">twoColumns</span>
<!-- p_editor -->
<div class="b" style="left:546px;top:792px;width:1513px;height:40px;background:#2f3037;"></div>
<div class="b" style="left:556.5px;top:593px;width:9px;height:238px;background:#27478f;border-radius:4.5px;box-shadow:inset 0 0 0 1.6px #3b7df5;"></div>
<div class="b" style="left:556.5px;top:873px;width:9px;height:38px;background:#27478f;border-radius:4.5px;box-shadow:inset 0 0 0 1.6px #3b7df5;"></div>
<div class="b" style="left:556.5px;top:1073px;width:9px;height:38px;background:#27478f;border-radius:4.5px;box-shadow:inset 0 0 0 1.6px #3b7df5;"></div>
<div class="b" style="left:644px;top:194px;width:14px;height:236px;background:#3b3c42;border-radius:7px 7px 7px 7px;"></div>
<div class="b" style="left:644px;top:554px;width:14px;height:1236px;background:#3b3c42;border-radius:7px 7px 7px 7px;"></div>
<div class="b" style="left:644px;top:674px;width:14px;height:156px;background:#4c4d52;border-radius:7px 7px 7px 7px;box-shadow:0 0 0 1px rgba(0,0,0,0.18);"></div>
<div class="b" style="left:644px;top:914px;width:14px;height:836px;background:#4c4d52;border-radius:7px 7px 7px 7px;box-shadow:0 0 0 1px rgba(0,0,0,0.18);"></div>
<div class="b" style="left:644px;top:994px;width:14px;height:716px;background:#5c5d61;border-radius:7px 7px 7px 7px;box-shadow:0 0 0 1px rgba(0,0,0,0.18);"></div>
<div class="b" style="left:644px;top:1074px;width:14px;height:516px;background:#6c6d70;border-radius:7px 7px 7px 7px;box-shadow:0 0 0 1px rgba(0,0,0,0.18);"></div>
<div class="b" style="left:644px;top:1154px;width:14px;height:356px;background:#7b7b7e;border-radius:7px 7px 7px 7px;box-shadow:0 0 0 1px rgba(0,0,0,0.18);"></div>
<div class="b" style="left:644px;top:1234px;width:14px;height:196px;background:#8b8b8d;border-radius:7px 7px 7px 7px;box-shadow:0 0 0 1px rgba(0,0,0,0.18);"></div>
<div class="b" style="left:644px;top:1331px;width:14px;height:1.5px;background:#55565a;"></div>
<span class="ln" style="top:192.5px;">1</span>
<span class="code" style="top:194px"><span class="c">//</span></span>
<span class="ln" style="top:232.5px;">2</span>
<span class="code" style="top:234px"><span class="c">//  GalleryView.swift</span></span>
<span class="ln" style="top:272.5px;">3</span>
<span class="code" style="top:274px"><span class="c">//  Landmarks</span></span>
<span class="ln" style="top:312.5px;">4</span>
<span class="code" style="top:314px"><span class="c">//</span></span>
<span class="ln" style="top:352.5px;">5</span>
<span class="code" style="top:354px"><span class="c">//  Created by Russell Gordon on 2024-01-27.</span></span>
<span class="ln" style="top:392.5px;">6</span>
<span class="code" style="top:394px"><span class="c">//</span></span>
<span class="ln" style="top:432.5px;">7</span>
<span class="ln" style="top:472.5px;">8</span>
<span class="code" style="top:474px"><span class="k">import</span> SwiftUI</span>
<span class="ln" style="top:512.5px;">9</span>
<span class="ln" style="top:552.5px;">10</span>
<span class="code" style="top:554px"><span class="k">struct</span> <span class="td">GalleryView</span>: <span class="sc">View</span> {</span>
<span class="ln" style="top:592.5px;">11</span>
<span class="ln" style="top:632.5px;">12</span>
<span class="code" style="top:634px">    <span class="c">// </span><span class="mk">MARK: Stored properties</span></span>
<span class="ln" style="top:672.5px;">13</span>
<span class="code" style="top:674px">    <span class="k">let</span> <span class="od">twoColumns</span> = [</span>
<span class="ln" style="top:712.5px;">14</span>
<span class="code" style="top:714px">        <span class="sc">GridItem</span>(.<span class="sf">adaptive</span>(<span class="sf">minimum</span>: <span class="n">100</span>, <span class="sf">maximum</span>: <span class="n">200</span>), <span class="sf">alignment</span>: .<span class="sf">top</span>),</span>
<span class="ln" style="top:752.5px;">15</span>
<span class="code" style="top:754px">        <span class="sc">GridItem</span>(.<span class="sf">adaptive</span>(<span class="sf">minimum</span>: <span class="n">100</span>, <span class="sf">maximum</span>: <span class="n">200</span>), <span class="sf">alignment</span>: .<span class="sf">top</span>),</span>
<span class="ln" style="top:792.5px;color:#fff;">16</span>
<span class="code" style="top:794px">    ]</span>
<span class="ln" style="top:832.5px;">17</span>
<span class="ln" style="top:872.5px;">18</span>
<span class="code" style="top:874px">    <span class="c">// </span><span class="mk">MARK: Computed properties</span></span>
<span class="ln" style="top:912.5px;">19</span>
<span class="code" style="top:914px">    <span class="k">var</span> <span class="od">body</span>: <span class="k">some</span> <span class="sc">View</span> {</span>
<span class="ln" style="top:952.5px;">20</span>
<span class="ln" style="top:992.5px;">21</span>
<span class="code" style="top:994px">        <span class="sc">NavigationStack</span> {</span>
<span class="ln" style="top:1032.5px;">22</span>
<span class="ln" style="top:1072.5px;">23</span>
<span class="code" style="top:1074px">            <span class="sc">LazyVGrid</span>(<span class="sf">columns</span>: <span class="pv">twoColumns</span>) {</span>
<span class="ln" style="top:1112.5px;">24</span>
<span class="ln" style="top:1152.5px;">25</span>
<span class="code" style="top:1154px">                <span class="sc">ForEach</span>(<span class="pv">allLandmarks</span>) { currentLandmark <span class="k">in</span></span>
<span class="ln" style="top:1192.5px;">26</span>
<span class="ln" style="top:1232.5px;">27</span>
<span class="code" style="top:1234px">                    <span class="sc">NavigationLink</span> {</span>
<span class="ln" style="top:1272.5px;">28</span>
<span class="code" style="top:1274px">                        <span class="pc">DetailView</span>(<span class="pv">item</span>: currentLandmark)</span>
<span class="ln" style="top:1312.5px;">29</span>
<span class="code" style="top:1314px">                    } <span class="sf">label</span>: {</span>
<span class="ln" style="top:1352.5px;">30</span>
<span class="code" style="top:1354px">                        <span class="pc">GalleryItemView</span>(<span class="pv">item</span>: currentLandmark)</span>
<span class="ln" style="top:1392.5px;">31</span>
<span class="code" style="top:1394px">                    }</span>
<span class="ln" style="top:1432.5px;">32</span>
<span class="ln" style="top:1472.5px;">33</span>
<span class="code" style="top:1474px">                }</span>
<span class="ln" style="top:1512.5px;">34</span>
<span class="ln" style="top:1552.5px;">35</span>
<span class="code" style="top:1554px">            }</span>
<span class="ln" style="top:1592.5px;">36</span>
<span class="code" style="top:1594px">            .<span class="sf">navigationTitle</span>(<span class="s">"Landmarks"</span>)</span>
<span class="ln" style="top:1632.5px;">37</span>
<span class="ln" style="top:1672.5px;">38</span>
<span class="code" style="top:1674px">        }</span>
<span class="ln" style="top:1712.5px;">39</span>
<span class="code" style="top:1714px">    }</span>
<span class="ln" style="top:1752.5px;">40</span>
<span class="code" style="top:1754px">}</span>
<span class="ln" style="top:1792.5px;">41</span>
<!-- p_canvas -->
<div class="b" style="left:2061px;top:189px;width:963px;height:1643px;overflow:hidden;"><div class="b" style="left:-2061px;top:-189px;width:3024px;height:1888px;">
<div class="b" style="left:2109.5px;top:636.5px;width:10px;height:63px;background:#323234;border-radius:3px;box-shadow:inset 0 0 0 1px rgba(255,255,255,0.16);"></div>
<div class="b" style="left:2109.5px;top:759.5px;width:10px;height:123px;background:#323234;border-radius:3px;box-shadow:inset 0 0 0 1px rgba(255,255,255,0.16);"></div>
<div class="b" style="left:2109.5px;top:918px;width:10px;height:122.5px;background:#323234;border-radius:3px;box-shadow:inset 0 0 0 1px rgba(255,255,255,0.16);"></div>
<div class="b" style="left:2966px;top:841px;width:11px;height:197px;background:#323234;border-radius:3px;box-shadow:inset 0 0 0 1px rgba(255,255,255,0.16);"></div>
<div class="b" style="left:2118px;top:317px;width:850px;height:1700px;border-radius:144px / 150px;background:#2c2c2d;box-shadow:inset 0 0 0 1.6px #98989b;"></div>
<div class="b" style="left:2120px;top:503px;width:11px;height:12px;background:#242425;"></div>
<div class="b" style="left:2955px;top:503px;width:11px;height:12px;background:#242425;"></div>
<div class="b" style="left:2768px;top:319px;width:12px;height:11px;background:#242425;"></div>
<div class="b" style="left:2130.5px;top:330px;width:825px;height:1700px;border-radius:131px / 136px;background:#000;"></div>
<div class="b" style="left:2150.5px;top:350.5px;width:785.5px;height:1700px;border-radius:110px / 114px;background:#fff;"></div>
<svg class="b" style="left:2217.5px;top:380px" width="250" height="250" viewBox="0 0 250 250"><defs><clipPath id="c1"><circle cx="125" cy="125" r="125"/></clipPath><filter id="b1a" x="-20%" y="-20%" width="140%" height="140%"><feGaussianBlur stdDeviation="1.2"/></filter><filter id="b1b" x="-30%" y="-30%" width="160%" height="160%"><feGaussianBlur stdDeviation="4"/></filter><filter id="b1c" x="-30%" y="-30%" width="160%" height="160%"><feGaussianBlur stdDeviation="9"/></filter><linearGradient id="n1" x1="0" y1="0" x2="0" y2="1"><stop offset="0" stop-color="#25437c"/><stop offset="0.45" stop-color="#3860a3"/><stop offset="0.8" stop-color="#5883c2"/><stop offset="1" stop-color="#7c9fd2"/></linearGradient><linearGradient id="n2" x1="0" y1="0" x2="1" y2="0.3"><stop offset="0" stop-color="#8796b0"/><stop offset="0.45" stop-color="#b2bdd2"/><stop offset="0.62" stop-color="#9fadc6"/><stop offset="1" stop-color="#aab5cb"/></linearGradient></defs><g clip-path="url(#c1)"><rect width="250" height="250" fill="url(#n1)"/><ellipse cx="228" cy="118" rx="26" ry="42" fill="#b4c6e2" opacity="0.5" filter="url(#b1c)"/><ellipse cx="215" cy="160" rx="30" ry="10" fill="#b4c6e2" opacity="0.35" filter="url(#b1b)"/><path d="M18 196Q42 176 72 160L84 168Q60 182 34 196Z" fill="#c3cbd9" opacity="0.9" filter="url(#b1b)"/><path d="M22 194Q44 179 68 166L74 170Q54 182 36 192Z" fill="#d3d9e3" opacity="0.9" filter="url(#b1a)"/><polygon points="112.5,31.4 149.5,40 181.6,63.2 200.7,95.7 200,132.9 184.3,164.1 150.4,183.8 109.6,182 68.2,157 48.2,115 53.9,73 78,43.6" fill="#4f565f" transform="translate(-3.5,2.5)"/><polygon points="112.5,31.4 149.5,40 181.6,63.2 200.7,95.7 200,132.9 184.3,164.1 150.4,183.8 109.6,182 68.2,157 48.2,115 53.9,73 78,43.6" fill="url(#n2)"/><polygon points="112.5,31.4 149.5,40 181.6,63.2 200.7,95.7 200,132.9 184.3,164.1 150.4,183.8 109.6,182 68.2,157 48.2,115 53.9,73 78,43.6" fill="none" stroke="#d9dfea" stroke-width="1.6" stroke-dasharray="1.2 1.6" transform="translate(125.5,108) scale(0.955) translate(-125.5,-108)"/><g stroke="#dfe5ee" stroke-width="1.3" fill="none" opacity="0.85"><path d="M127 36V118"/><path d="M64 116L193 133"/><path d="M66 96Q80 90 92 97T120 96"/><path d="M140 105Q160 98 180 108"/></g><g fill="#e3e8f0" opacity="0.8" font-family="Liberation Sans,sans-serif" font-weight="700"><text x="76" y="62" font-size="13" transform="rotate(-16 76 62)">CAN</text><text x="134" y="54" font-size="13" transform="rotate(22 134 54)">ADA</text><text x="72" y="78" font-size="9">NICKEL</text><text x="66" y="92" font-size="10">1751-1951</text><text x="140" y="80" font-size="12">5</text><text x="140" y="104" font-size="10">CENTS</text></g><path d="M125 140L131 150L140 147L137 158L146 162L136 168L138 175H112L114 168L104 162L113 158L110 147L119 150Z" fill="#c6cfde" opacity="0.8"/><polygon points="97,185 160,186 174,193 88,191" fill="#5f5952"/><rect x="88" y="191" width="85" height="62" fill="#85766b"/><g fill="#a8998c" opacity="0.7"><rect x="92" y="196" width="10" height="6"/><rect x="108" y="200" width="12" height="7"/><rect x="128" y="195" width="9" height="6"/><rect x="146" y="201" width="12" height="6"/><rect x="98" y="212" width="11" height="7"/><rect x="120" y="214" width="10" height="6"/><rect x="140" y="214" width="12" height="7"/><rect x="158" y="210" width="9" height="6"/><rect x="94" y="226" width="12" height="6"/><rect x="114" y="228" width="10" height="6"/><rect x="134" y="228" width="11" height="6"/><rect x="154" y="226" width="12" height="6"/></g><g fill="#5a4c44" opacity="0.6"><rect x="103" y="204" width="8" height="6"/><rect x="132" y="205" width="9" height="6"/><rect x="150" y="219" width="8" height="6"/><rect x="108" y="220" width="8" height="5"/></g><polygon points="62,228 188,228 200,238 50,238" fill="#8f8f8a"/><rect x="40" y="238" width="170" height="14" fill="#77756f"/></g></svg>
<svg class="b" style="left:2618px;top:380px" width="250" height="250" viewBox="0 0 250 250"><defs><clipPath id="c2"><circle cx="125" cy="125" r="125"/></clipPath><filter id="b2a" x="-20%" y="-20%" width="140%" height="140%"><feGaussianBlur stdDeviation="1.2"/></filter><filter id="b2b" x="-30%" y="-30%" width="160%" height="160%"><feGaussianBlur stdDeviation="4"/></filter><filter id="b2c" x="-30%" y="-30%" width="160%" height="160%"><feGaussianBlur stdDeviation="9"/></filter><linearGradient id="f1" x1="0" y1="0" x2="0" y2="1"><stop offset="0" stop-color="#f2c184"/><stop offset="1" stop-color="#f7d29e"/></linearGradient><linearGradient id="f2" x1="0" y1="0" x2="0" y2="1"><stop offset="0" stop-color="#b3b8be"/><stop offset="0.4" stop-color="#6d7582"/><stop offset="1" stop-color="#3a4150"/></linearGradient><linearGradient id="f3" x1="0" y1="0" x2="0" y2="1"><stop offset="0" stop-color="#3f918e"/><stop offset="0.1" stop-color="#62aeac"/><stop offset="0.3" stop-color="#a9d2d6"/><stop offset="0.55" stop-color="#c8d4ee"/><stop offset="1" stop-color="#c4c6f2"/></linearGradient></defs><g clip-path="url(#c2)"><rect width="250" height="250" fill="#c6c9f0"/><rect width="250" height="36" fill="url(#f1)"/><path d="M40 47L44 38L52 36L58 33L66 34L74 31L84 32L92 30L100 31L110 29L120 30L130 29L140 30L150 28L160 29L170 28L182 29L194 28L206 29L218 30L232 34L250 40V47Z" fill="#4f5f2b"/><path d="M60 40L70 36L82 37L96 35L110 36L124 34L138 35L152 33L168 34L184 33L200 34L216 35L230 38V42H60Z" fill="#6a7a38" opacity="0.7"/><rect x="0" y="45" width="250" height="30" fill="url(#f2)"/><rect x="40" y="46" width="200" height="3" fill="#e6e8ea" opacity="0.8"/><path d="M0 75Q20 64 55 65Q95 66 130 72Q180 78 232 76Q244 78 250 84V250H0Z" fill="url(#f3)"/><path d="M10 70Q30 62 55 64Q95 65 130 71Q180 77 232 75L250 82V90Q180 84 130 79Q95 73 55 72Q30 71 10 78Z" fill="#2e3443" opacity="0.75" filter="url(#b2a)"/><ellipse cx="28" cy="160" rx="55" ry="80" fill="#c9ccf2" filter="url(#b2c)"/><g stroke="#e4ecf6" stroke-width="3" opacity="0.55" filter="url(#b2a)"><path d="M60 72Q52 120 50 200"/><path d="M84 72Q80 130 82 215"/><path d="M108 74Q106 140 112 230"/><path d="M135 78Q134 150 128 240"/><path d="M160 82Q156 130 140 215"/><path d="M186 84Q178 120 160 170"/><path d="M212 84Q204 105 186 135"/></g><g stroke="#4fa09e" stroke-width="4" opacity="0.5" filter="url(#b2a)"><path d="M72 72Q68 100 66 125"/><path d="M96 73Q94 100 96 130"/><path d="M122 76Q120 105 121 135"/><path d="M148 80Q146 105 142 130"/><path d="M174 84Q170 105 162 128"/><path d="M200 85Q194 100 184 118"/><path d="M30 70Q26 90 22 110"/></g><path d="M250 100Q215 106 190 126Q170 150 160 185Q140 225 100 252H250Z" fill="#5aa5a6" filter="url(#b2b)"/><path d="M250 112Q222 116 201 131Q193 158 181 192Q167 222 136 252H250Z" fill="#2a2f40"/><path d="M250 112Q222 116 201 131Q193 158 181 192Q167 222 136 252" fill="none" stroke="#3f7f86" stroke-width="5" opacity="0.7" filter="url(#b2a)"/><g stroke="#596078" stroke-width="2" opacity="0.7" fill="none"><path d="M250 126Q226 132 210 146Q202 172 192 205Q182 228 160 250"/><path d="M250 144Q232 150 220 164Q212 192 202 222Q194 238 184 250"/><path d="M250 166Q238 174 230 188Q224 212 212 240"/><path d="M250 192Q244 204 234 228"/></g><path d="M232 96Q244 100 250 106V118Q236 110 224 104Z" fill="#2e3443" opacity="0.8"/></g></svg>
<svg class="b" style="left:2217.5px;top:846.3px" width="250" height="250" viewBox="0 0 250 250"><defs><clipPath id="c3"><circle cx="125" cy="125" r="125"/></clipPath><filter id="b3a" x="-20%" y="-20%" width="140%" height="140%"><feGaussianBlur stdDeviation="1.2"/></filter><filter id="b3b" x="-30%" y="-30%" width="160%" height="160%"><feGaussianBlur stdDeviation="4"/></filter><filter id="b3c" x="-30%" y="-30%" width="160%" height="160%"><feGaussianBlur stdDeviation="9"/></filter><linearGradient id="t1" x1="0" y1="0" x2="0.4" y2="1"><stop offset="0" stop-color="#86577a"/><stop offset="0.45" stop-color="#b87080"/><stop offset="1" stop-color="#5e4466"/></linearGradient><linearGradient id="t2" x1="0" y1="0" x2="1" y2="0"><stop offset="0" stop-color="#000" stop-opacity="0"/><stop offset="0.55" stop-color="#000" stop-opacity="0"/><stop offset="0.85" stop-color="#140c10" stop-opacity="0.7"/><stop offset="1" stop-color="#140c10" stop-opacity="0.85"/></linearGradient><linearGradient id="t3" x1="0" y1="0" x2="0" y2="1"><stop offset="0" stop-color="#f3dcc6"/><stop offset="0.55" stop-color="#e6b98c"/><stop offset="1" stop-color="#b5713e"/></linearGradient><linearGradient id="t4" x1="0" y1="0" x2="1" y2="0"><stop offset="0" stop-color="#d0203f"/><stop offset="0.5" stop-color="#a81a34"/><stop offset="1" stop-color="#3a1218"/></linearGradient></defs><g clip-path="url(#c3)"><rect width="250" height="250" fill="url(#t1)"/><ellipse cx="230" cy="30" rx="60" ry="50" fill="#76507a" filter="url(#b3c)"/><ellipse cx="20" cy="120" rx="40" ry="50" fill="#c27a84" opacity="0.6" filter="url(#b3c)"/><rect x="100" y="-2" width="88" height="30" fill="#7d736c"/><rect x="108" y="10" width="40" height="14" fill="#a88a60"/><rect x="150" y="-2" width="40" height="30" fill="#3c3334"/><path d="M77 26Q134 18 213 26L230 66Q134 52 50 70Z" fill="#8f8a86"/><g stroke="#7a7572" stroke-width="1" opacity="0.7"><path d="M90 25L70 64M105 23L92 60M120 22L114 57M134 22V56M148 22L154 57M163 23L176 59M178 24L198 62M194 25L218 64"/></g><ellipse cx="67" cy="62" rx="17" ry="15" fill="#d9d0ca"/><path d="M64 70Q96 52 140 49Q186 49 214 62L216 70Q184 58 140 58Q98 60 68 79Z" fill="url(#t4)"/><path d="M16 118Q30 84 60 72L215 66Q250 80 262 120L262 190L20 190Z" fill="#2a2220"/><path d="M22 89.2378Q137 39.429 252 91.9043L252 107.043Q137 46.4949 22 103.967Z" fill="#a39a92" /><path d="M18 106Q137 44.4081 256 109.184L256 122.396Q137 53.302 18 119Z" fill="#2b2523" /><path d="M16 120.113Q137 52.1605 258 123.566L258 135.851Q137 59.9831 16 132.183Z" fill="#9b9189" /><path d="M15 132.781Q136.5 59.6836 258 135.851L258 147.137Q136.5 66.4886 15 143.886Z" fill="#2b2523" /><path d="M15 142.886Q136.5 65.4886 258 146.137L258 161.707Q136.5 72.0984 15 158.096Z" fill="#ab9b89" /><path d="M18 156Q137 73.8775 256 160.245L256 210.155Q137 84.9224 18 204Z" fill="#a46c3a" /><g fill="#3c2418"><path d="M48 143.085Q72 106.204 96 124.507L96 148.01Q72 123.605 48 172.78Z" fill="#3c2418" /><path d="M104 121.675Q131 116.806 158 120.712L158 143.226Q131 138.148 104 144.478Z" fill="#3c2418" /><path d="M164 122.809Q185 110.505 206 136.181L206 163.574Q185 129.34 164 145.746Z" fill="#3c2418" /></g><path d="M20 212Q30 168 80 150Q134 134 190 148Q240 162 262 190L262 215Q230 188 185 183Q134 178 90 190Q55 200 40 222Z" fill="url(#t3)"/><path d="M40 222Q55 200 90 190Q134 178 185 183Q230 188 262 215V260H30Z" fill="#2a1915"/><path d="M52 215Q70 200 100 194Q134 188 175 192" fill="none" stroke="#d9b28a" stroke-width="1.4" opacity="0.8"/><path d="M92 250L98 218L108 214L112 205L128 212L140 204L150 212L158 250Z" fill="#bf8650"/><rect x="114" y="228" width="22" height="24" fill="#2a1a14"/><rect x="118" y="212" width="5" height="40" fill="#6a4528"/><rect width="250" height="250" fill="url(#t2)"/><path d="M226 0H250V70Q236 60 226 56Z" fill="#76507a"/></g></svg>
<svg class="b" style="left:2618px;top:846.3px" width="250" height="250" viewBox="0 0 250 250"><defs><clipPath id="c4"><circle cx="125" cy="125" r="125"/></clipPath><filter id="b4a" x="-20%" y="-20%" width="140%" height="140%"><feGaussianBlur stdDeviation="1.2"/></filter><filter id="b4b" x="-30%" y="-30%" width="160%" height="160%"><feGaussianBlur stdDeviation="4"/></filter><filter id="b4c" x="-30%" y="-30%" width="160%" height="160%"><feGaussianBlur stdDeviation="9"/></filter><linearGradient id="r1" x1="0" y1="0" x2="0" y2="1"><stop offset="0" stop-color="#15319c"/><stop offset="0.6" stop-color="#2547bb"/><stop offset="1" stop-color="#3a5cc8"/></linearGradient><linearGradient id="r2" x1="0" y1="0" x2="0" y2="1"><stop offset="0" stop-color="#756b66"/><stop offset="0.55" stop-color="#9a8c82"/><stop offset="1" stop-color="#d9c9ba"/></linearGradient><linearGradient id="r3" x1="0" y1="0" x2="1" y2="0"><stop offset="0" stop-color="#c97b3a" stop-opacity="0.85"/><stop offset="0.12" stop-color="#c97b3a" stop-opacity="0"/></linearGradient><linearGradient id="r4" x1="0" y1="0" x2="1" y2="1"><stop offset="0" stop-color="#8ea6cc"/><stop offset="1" stop-color="#51699a"/></linearGradient></defs><g clip-path="url(#c4)"><rect width="250" height="250" fill="url(#r1)"/><path d="M0 78L24 72L27 68L44 74L62 76L74 72L78 68L98 90L116 100L134 106V218H0Z" fill="url(#r2)"/><path d="M0 78L24 72L27 68L44 74L62 76L74 72L78 68L98 90L116 100L134 106V218H0Z" fill="url(#r3)"/><path d="M54 130Q56 108 76 106Q96 108 98 130V174H54Z" fill="#6d625c"/><rect x="58" y="138" width="36" height="30" fill="#f0e7dd"/><path d="M60 134Q62 116 76 114Q90 116 92 134Z" fill="#4a4440"/><g stroke="#4a423c" stroke-width="2"><path d="M67 138V168M76 138V168M85 138V168M58 153H94"/></g><rect x="60" y="182" width="10" height="20" fill="#3a342e"/><rect x="73" y="182" width="10" height="20" fill="#3a342e"/><rect x="22" y="102" width="5" height="12" fill="#3e3834"/><rect x="0" y="196" width="134" height="22" fill="#e8d6c4" opacity="0.55" filter="url(#b4b)"/><rect x="73" y="196" width="12" height="20" fill="#6a3a1e"/><polygon points="96,86 222,44 240,64 204,96 150,150 104,154" fill="url(#r4)"/><g stroke="#16265c" stroke-width="3.2" fill="none"><path d="M108 90L150 150M124 80L172 128M144 74L196 104M176 62L206 92M100 100L224 48M112 124L236 60"/></g><polygon points="178,74 200,66 214,84 190,94" fill="#35508a"/><polygon points="150,150 204,96 240,64 250,76 262,110 262,216 132,216 134,162" fill="#b8b1bb"/><polygon points="104,154 150,150 134,216 112,216" fill="#d8d0d0"/><polygon points="240,64 250,76 236,160 200,216 186,216 214,120" fill="#d4cfd8"/><polygon points="196,100 226,84 190,180 160,200 168,150" fill="#2b3244"/><polygon points="128,130 146,120 152,148 136,168" fill="#3d4e52"/><polygon points="140,186 160,166 156,204 138,214" fill="#33443e"/><polygon points="164,176 184,160 176,200 164,206" fill="#4b5a4a"/><polygon points="214,160 240,146 250,150 250,170 204,214 190,214" fill="#6d6670"/><polygon points="250,96 262,96 262,150 244,140" fill="#c9c6d2"/><path d="M223 150V206" stroke="#b4652c" stroke-width="2"/><circle cx="223" cy="148" r="9" fill="#fff2d8" filter="url(#b4b)"/><circle cx="223" cy="148" r="4" fill="#fff"/><rect x="178" y="200" width="60" height="14" fill="#f0e6d0" opacity="0.75"/><rect x="0" y="214" width="250" height="5" fill="#2a2422"/><rect x="0" y="218" width="250" height="34" fill="#c88a52"/><rect x="0" y="218" width="250" height="8" fill="#a8683a"/></g></svg>
<svg class="b" style="left:2217.5px;top:1357px" width="250" height="250" viewBox="0 0 250 250"><defs><clipPath id="c5"><circle cx="125" cy="125" r="125"/></clipPath><filter id="b5a" x="-20%" y="-20%" width="140%" height="140%"><feGaussianBlur stdDeviation="1.2"/></filter><filter id="b5b" x="-30%" y="-30%" width="160%" height="160%"><feGaussianBlur stdDeviation="4"/></filter><filter id="b5c" x="-30%" y="-30%" width="160%" height="160%"><feGaussianBlur stdDeviation="9"/></filter><linearGradient id="w1" x1="0" y1="0" x2="0" y2="1"><stop offset="0" stop-color="#f4efec"/><stop offset="0.35" stop-color="#f7dfa6"/><stop offset="0.62" stop-color="#f8bf52"/><stop offset="1" stop-color="#ef8548"/></linearGradient><linearGradient id="w2" x1="0" y1="0" x2="1" y2="0"><stop offset="0" stop-color="#6f4680"/><stop offset="0.35" stop-color="#a04a6c"/><stop offset="0.54" stop-color="#dc5548"/><stop offset="0.75" stop-color="#a04a6c"/><stop offset="1" stop-color="#7a4a80"/></linearGradient><filter id="fw" x="-10%" y="-10%" width="120%" height="120%"><feTurbulence type="fractalNoise" baseFrequency="0.09 0.12" numOctaves="3" seed="5" result="n"/><feDisplacementMap in="SourceGraphic" in2="n" scale="14" xChannelSelector="R" yChannelSelector="G"/><feGaussianBlur stdDeviation="0.7"/></filter><radialGradient id="w3"><stop offset="0" stop-color="#fff"/><stop offset="0.35" stop-color="#fff3b0"/><stop offset="1" stop-color="#f8c050" stop-opacity="0"/></radialGradient></defs><g clip-path="url(#c5)"><rect width="250" height="250" fill="#2c3a1e"/><rect width="250" height="52" fill="url(#w1)"/><circle cx="136" cy="38" r="20" fill="url(#w3)"/><rect x="0" y="46" width="250" height="26" fill="url(#w2)"/><rect x="0" y="46" width="250" height="6" fill="url(#w2)" opacity="0.6" filter="url(#b5a)"/><rect x="0" y="66" width="250" height="64" fill="#655668"/><ellipse cx="136" cy="70" rx="50" ry="10" fill="#b8584c" opacity="0.7" filter="url(#b5b)"/><g filter="url(#fw)"><ellipse cx="110" cy="74" rx="30" ry="7" fill="#4c5a30"/><ellipse cx="190" cy="80" rx="40" ry="9" fill="#3e4c2a"/><ellipse cx="40" cy="84" rx="30" ry="8" fill="#3c4430"/><rect x="112" y="82" width="46" height="12" fill="#7f92c8"/><rect x="96" y="96" width="70" height="12" fill="#8a6a90"/><rect x="20" y="86" width="40" height="10" fill="#4a78c0"/><rect x="80" y="106" width="40" height="12" fill="#9c86b8"/><rect x="224" y="96" width="26" height="10" fill="#4a9ad0"/><ellipse cx="150" cy="114" rx="32" ry="12" fill="#56682e"/><ellipse cx="205" cy="108" rx="30" ry="14" fill="#2e3c22"/><ellipse cx="230" cy="130" rx="30" ry="16" fill="#243018"/><rect x="160" y="108" width="20" height="10" fill="#e08a8a"/><rect x="186" y="112" width="10" height="16" fill="#e8b0b0"/></g><path d="M0 124L40 126L64 134L96 146L132 140L140 150L100 162L60 170L30 180L0 186Z" fill="#c2b2d4" filter="url(#b5a)"/><g filter="url(#fw)"><ellipse cx="66" cy="150" rx="30" ry="12" fill="#33452a"/><ellipse cx="112" cy="152" rx="22" ry="14" fill="#4a5c2c"/><ellipse cx="30" cy="132" rx="34" ry="8" fill="#2c3a22"/><ellipse cx="90" cy="130" rx="30" ry="8" fill="#3a4a2a"/><ellipse cx="150" cy="150" rx="14" ry="18" fill="#33461f"/></g><path d="M130 170L250 150V250H100Z" fill="#3b5e2c"/><ellipse cx="230" cy="150" rx="30" ry="14" fill="#26331c" filter="url(#fw)"/><ellipse cx="86" cy="192" rx="62" ry="28" fill="#8a6a68" filter="url(#b5a)"/><ellipse cx="100" cy="188" rx="34" ry="14" fill="#a07f7a" opacity="0.7" filter="url(#b5b)"/><ellipse cx="50" cy="212" rx="36" ry="24" fill="#2a3d1c" filter="url(#fw)"/><ellipse cx="20" cy="176" rx="14" ry="10" fill="#25331a"/><path d="M172 128Q176 150 166 170Q150 196 124 222Q110 238 104 252" fill="none" stroke="#8e9bc0" stroke-width="13" filter="url(#b5a)"/><path d="M180 172L250 186V200L178 184Z" fill="#6f86b8" opacity="0.8"/><g stroke="#3a7ae4" stroke-width="2.2" fill="none"><path d="M40 46V118M22 70V120M62 66V134M84 90V146M100 108V150M30 110L40 60M50 110L40 60M14 112L22 72"/><path d="M162 124L150 176M162 124L166 176M192 130L180 188M192 130L198 182M212 136V190M224 140L236 200M104 200L84 236M104 200V238M128 206V250M172 186L132 232M172 186V236M206 168V210M206 168L232 200M118 200L114 216"/></g><g stroke="#f2a552" stroke-width="3" fill="none" stroke-linecap="round"><path d="M0 108Q14 52 34 44Q48 40 64 62Q96 106 128 126Q148 134 160 124"/><path d="M0 128Q20 132 32 110Q46 90 60 98Q78 112 98 146Q112 150 132 132Q150 116 168 122Q210 132 250 142"/><ellipse cx="130" cy="198" rx="24" ry="9"/><ellipse cx="226" cy="164" rx="20" ry="6.5"/><path d="M154 196Q176 186 178 140"/><path d="M150 204Q190 212 214 218"/></g><g stroke="#7a5a48" stroke-width="1.6" fill="none" opacity="0.8"><path d="M6 140Q16 170 28 178M24 140Q36 166 46 172M44 146Q50 160 60 164"/></g><g stroke="#c2475a" stroke-width="2.4" fill="none"><path d="M148 92L158 48Q168 44 176 48L174 92M156 92L164 52M166 92L172 54"/></g><path d="M207 32L205 92" stroke="#4a3a52" stroke-width="3.4"/><path d="M207 32L206 60" stroke="#d8c0c8" stroke-width="1.6"/></g></svg>
<svg class="b" style="left:2618px;top:1357px" width="250" height="250" viewBox="0 0 250 250"><defs><clipPath id="c6"><circle cx="125" cy="125" r="125"/></clipPath><filter id="b6a" x="-20%" y="-20%" width="140%" height="140%"><feGaussianBlur stdDeviation="1.2"/></filter><filter id="b6b" x="-30%" y="-30%" width="160%" height="160%"><feGaussianBlur stdDeviation="4"/></filter><filter id="b6c" x="-30%" y="-30%" width="160%" height="160%"><feGaussianBlur stdDeviation="9"/></filter><linearGradient id="k1" x1="0" y1="0" x2="0" y2="1"><stop offset="0" stop-color="#b4c9ee"/><stop offset="1" stop-color="#dbe5f6"/></linearGradient><linearGradient id="k2" x1="0" y1="0" x2="0" y2="1"><stop offset="0" stop-color="#51658f"/><stop offset="0.5" stop-color="#7185b0"/><stop offset="1" stop-color="#909fc8"/></linearGradient><filter id="fol" x="-10%" y="-10%" width="120%" height="120%"><feTurbulence type="fractalNoise" baseFrequency="0.07 0.11" numOctaves="3" seed="7" result="n"/><feDisplacementMap in="SourceGraphic" in2="n" scale="18" xChannelSelector="R" yChannelSelector="G" result="d"/><feColorMatrix in="n" type="matrix" values="0 0 0 0 0  0 0 0 0 0  0 0 0 0 0  -11 0 0 0 6.6" result="m"/><feComposite in="d" in2="m" operator="in"/><feGaussianBlur stdDeviation="0.5"/></filter><filter id="fol2" x="-10%" y="-10%" width="120%" height="120%"><feTurbulence type="fractalNoise" baseFrequency="0.06 0.1" numOctaves="3" seed="11" result="n"/><feDisplacementMap in="SourceGraphic" in2="n" scale="18" xChannelSelector="R" yChannelSelector="G" result="d"/><feColorMatrix in="n" type="matrix" values="0 0 0 0 0  0 0 0 0 0  0 0 0 0 0  -10 0 0 0 6.9" result="m"/><feComposite in="d" in2="m" operator="in"/><feGaussianBlur stdDeviation="1"/></filter></defs><g clip-path="url(#c6)"><rect width="250" height="250" fill="url(#k1)"/><g fill="#f2f5fb" filter="url(#b6b)" opacity="0.9"><ellipse cx="110" cy="22" rx="44" ry="9"/><ellipse cx="200" cy="50" rx="36" ry="10"/><ellipse cx="180" cy="22" rx="30" ry="6"/><ellipse cx="60" cy="48" rx="30" ry="7"/></g><rect x="0" y="134" width="250" height="120" fill="url(#k2)"/><ellipse cx="190" cy="160" rx="24" ry="30" fill="#c2d0ea" opacity="0.75" filter="url(#b6b)"/><ellipse cx="120" cy="236" rx="70" ry="18" fill="#a2b0d6" opacity="0.8" filter="url(#b6b)"/><g filter="url(#fol2)" opacity="0.9"><ellipse cx="30" cy="188" rx="28.56" ry="47.04" fill="#1d2519"/><ellipse cx="66" cy="200" rx="32.64" ry="44.8" fill="#1d2519"/><ellipse cx="50" cy="170" rx="38.76" ry="26.88" fill="#1d2519"/><ellipse cx="92" cy="184" rx="24.48" ry="42.56" fill="#1d2519"/><ellipse cx="112" cy="180" rx="20.4" ry="38.08" fill="#1d2519"/><ellipse cx="134" cy="222" rx="22.44" ry="44.8" fill="#1d2519"/><ellipse cx="152" cy="186" rx="36.72" ry="44.8" fill="#1d2519"/><ellipse cx="170" cy="168" rx="18.36" ry="22.4" fill="#1d2519"/><ellipse cx="238" cy="172" rx="28.56" ry="47.04" fill="#1d2519"/><ellipse cx="222" cy="156" rx="16.32" ry="22.4" fill="#1d2519"/><ellipse cx="14" cy="162" rx="18.36" ry="17.92" fill="#1d2519"/></g><g stroke="#161a12" stroke-width="1.6" opacity="0.75"><path d="M36 136V210M52 136V200M70 136V205M110 136V190M136 136V230M156 136V200M210 136V200M226 136V190"/></g><g stroke="#2a241e" stroke-width="1.8"><path d="M24 70V126M36 60V126M52 76V126M70 56V126M110 64V124M136 30V122M156 60V122M170 100V124"/></g><g filter="url(#fol)"><ellipse cx="30" cy="84" rx="28" ry="42" fill="#34412a"/><ellipse cx="66" cy="72" rx="32" ry="40" fill="#3f4e2c"/><ellipse cx="50" cy="102" rx="38" ry="24" fill="#2b3724"/><ellipse cx="92" cy="88" rx="24" ry="38" fill="#3c4a2a"/><ellipse cx="112" cy="92" rx="20" ry="34" fill="#334027"/><ellipse cx="134" cy="50" rx="22" ry="40" fill="#465533"/><ellipse cx="152" cy="86" rx="36" ry="40" fill="#42512f"/><ellipse cx="170" cy="104" rx="18" ry="20" fill="#394728"/><ellipse cx="238" cy="100" rx="28" ry="42" fill="#26311f"/><ellipse cx="222" cy="116" rx="16" ry="20" fill="#2c3824"/><ellipse cx="14" cy="110" rx="18" ry="16" fill="#323d2a"/></g><g fill="#536236" filter="url(#fol)" opacity="0.75"><ellipse cx="140" cy="40" rx="12" ry="22"/><ellipse cx="160" cy="76" rx="20" ry="20"/><ellipse cx="74" cy="60" rx="18" ry="16"/><ellipse cx="98" cy="76" rx="12" ry="18"/><ellipse cx="34" cy="70" rx="12" ry="16"/></g><g stroke="#4a4038" stroke-width="1.5" fill="none"><path d="M210 124V50M210 70L196 54M210 64L222 48M210 84L198 74M210 80L224 66M226 124V66M184 124V100"/></g><path d="M4 129L60 126L110 124L140 122L180 124L250 122V138L180 140L120 140L60 136L6 136Z" fill="#3e2b1d"/><path d="M104 128L120 122L150 121L166 126L160 134L110 134Z" fill="#6b6762"/><rect x="140" y="126" width="10" height="8" fill="#1c1712"/><path d="M4 136L60 136L120 140L180 140L250 138V146L180 147L120 148L60 143L6 142Z" fill="#1f1a15" opacity="0.8"/></g></svg>
<div class="b" style="left:2418px;top:372.5px;width:249px;height:72px;background:#000;border-radius:36px;"></div>
<span class="t" style="left:2181.5px;top:553.2px;font-size:67.5px;line-height:80px;color:#000;letter-spacing:-1.209px;font-weight:700;-webkit-text-stroke:0.3px;">Landmarks</span>
<span class="t" style="left:2222.5px;top:648.0px;font-size:34px;line-height:44px;color:#3478f6;letter-spacing:-0.615px;font-weight:700;-webkit-text-stroke:0;">Sudbury Nickel</span>
<span class="t" style="left:2642.5px;top:648.0px;font-size:34px;line-height:44px;color:#3478f6;letter-spacing:-0.805px;font-weight:700;-webkit-text-stroke:0;">Niagara Falls</span>
<span class="t" style="left:2266.5px;top:1115.7px;font-size:34px;line-height:44px;color:#3478f6;letter-spacing:-0.594px;font-weight:700;-webkit-text-stroke:0;">CN Tower</span>
<span class="t" style="left:2638.0px;top:1115.7px;font-size:34px;line-height:44px;color:#3478f6;letter-spacing:-0.995px;font-weight:700;-webkit-text-stroke:0;">Royal Ontario</span>
<span class="t" style="left:2676.5px;top:1159.5px;font-size:34px;line-height:44px;color:#3478f6;letter-spacing:-0.681px;font-weight:700;-webkit-text-stroke:0;">Museum</span>
<span class="t" style="left:2269.0px;top:1626.5px;font-size:34px;line-height:44px;color:#3478f6;letter-spacing:-0.254px;font-weight:700;-webkit-text-stroke:0;">Canada's</span>
<span class="t" style="left:2248.0px;top:1670.5px;font-size:34px;line-height:44px;color:#3478f6;letter-spacing:-0.701px;font-weight:700;-webkit-text-stroke:0;">Wonderland</span>
<span class="t" style="left:2626.0px;top:1626.5px;font-size:34px;line-height:44px;color:#3478f6;letter-spacing:-0.570px;font-weight:700;-webkit-text-stroke:0;">The Kawarthas</span>
<svg class="b" style="left:2322.04px;top:714.811px;" width="40.7407" height="42.5926" viewBox="480 320 880 920"><g fill="none" stroke="#3478f6" stroke-width="60" stroke-linejoin="round" stroke-linecap="round"><path d="M680 395C800 380 920 385 1000 420C1090 465 1135 550 1130 650C1125 740 1090 800 1050 850C980 940 900 1050 850 1150C835 1180 810 1185 790 1180C745 1165 735 1130 745 1090C760 1030 790 960 800 910C805 875 790 850 750 850L620 850C560 850 530 800 565 750C530 720 535 660 580 630C545 595 560 540 610 515C590 470 610 410 680 395Z"/><path d="M1000 420L1120 420C1220 420 1290 520 1290 640C1290 750 1220 840 1140 840L1075 840"/></g></svg>
<svg class="b" style="left:2722.1px;top:714.648px;" width="40.7407" height="42.5926" viewBox="480 320 880 920"><path d="M1080 360C1130 360 1150 400 1140 450C1125 520 1085 590 1065 650C1055 690 1075 710 1115 710L1270 710C1340 710 1375 780 1335 835C1365 870 1360 930 1315 965C1345 1005 1335 1065 1280 1095C1300 1150 1275 1205 1215 1215C1130 1228 1030 1232 950 1225C820 1210 725 1100 722 960C720 860 760 770 820 690C900 590 970 490 1020 400C1035 375 1055 360 1080 360Z" fill="#3478f6"/><path d="M740 715C600 710 515 830 515 950C515 1080 600 1190 770 1185C690 1120 660 1020 665 940C670 860 700 780 740 715Z" fill="#3478f6"/></svg>
<svg class="b" style="left:2322.04px;top:1225.41px;" width="40.7407" height="42.5926" viewBox="480 320 880 920"><g fill="none" stroke="#3478f6" stroke-width="60" stroke-linejoin="round" stroke-linecap="round"><path d="M680 395C800 380 920 385 1000 420C1090 465 1135 550 1130 650C1125 740 1090 800 1050 850C980 940 900 1050 850 1150C835 1180 810 1185 790 1180C745 1165 735 1130 745 1090C760 1030 790 960 800 910C805 875 790 850 750 850L620 850C560 850 530 800 565 750C530 720 535 660 580 630C545 595 560 540 610 515C590 470 610 410 680 395Z"/><path d="M1000 420L1120 420C1220 420 1290 520 1290 640C1290 750 1220 840 1140 840L1075 840"/></g></svg>
<svg class="b" style="left:2722.1px;top:1225.15px;" width="40.7407" height="42.5926" viewBox="480 320 880 920"><path d="M1080 360C1130 360 1150 400 1140 450C1125 520 1085 590 1065 650C1055 690 1075 710 1115 710L1270 710C1340 710 1375 780 1335 835C1365 870 1360 930 1315 965C1345 1005 1335 1065 1280 1095C1300 1150 1275 1205 1215 1215C1130 1228 1030 1232 950 1225C820 1210 725 1100 722 960C720 860 760 770 820 690C900 590 970 490 1020 400C1035 375 1055 360 1080 360Z" fill="#3478f6"/><path d="M740 715C600 710 515 830 515 950C515 1080 600 1190 770 1185C690 1120 660 1020 665 940C670 860 700 780 740 715Z" fill="#3478f6"/></svg>
<svg class="b" style="left:2321.6px;top:1736.15px;" width="40.7407" height="42.5926" viewBox="480 320 880 920"><path d="M1080 360C1130 360 1150 400 1140 450C1125 520 1085 590 1065 650C1055 690 1075 710 1115 710L1270 710C1340 710 1375 780 1335 835C1365 870 1360 930 1315 965C1345 1005 1335 1065 1280 1095C1300 1150 1275 1205 1215 1215C1130 1228 1030 1232 950 1225C820 1210 725 1100 722 960C720 860 760 770 820 690C900 590 970 490 1020 400C1035 375 1055 360 1080 360Z" fill="#3478f6"/><path d="M740 715C600 710 515 830 515 950C515 1080 600 1190 770 1185C690 1120 660 1020 665 940C670 860 700 780 740 715Z" fill="#3478f6"/></svg>
<svg class="b" style="left:2722.1px;top:1736.15px;" width="40.7407" height="42.5926" viewBox="480 320 880 920"><path d="M1080 360C1130 360 1150 400 1140 450C1125 520 1085 590 1065 650C1055 690 1075 710 1115 710L1270 710C1340 710 1375 780 1335 835C1365 870 1360 930 1315 965C1345 1005 1335 1065 1280 1095C1300 1150 1275 1205 1215 1215C1130 1228 1030 1232 950 1225C820 1210 725 1100 722 960C720 860 760 770 820 690C900 590 970 490 1020 400C1035 375 1055 360 1080 360Z" fill="#3478f6"/><path d="M740 715C600 710 515 830 515 950C515 1080 600 1190 770 1185C690 1120 660 1020 665 940C670 860 700 780 740 715Z" fill="#3478f6"/></svg>
</div></div>
<div class="b" style="left:2085px;top:214.5px;width:62.5px;height:51px;background:#393939;border-radius:11px;box-shadow:0 1px 3px rgba(0,0,0,0.35), 0 0 0 1px rgba(0,0,0,0.12);border:0;outline:1px solid rgba(255,255,255,0.08);outline-offset:-1px;"></div>
<svg class="b" style="left:2103px;top:224px;" width="26" height="32" viewBox="0 0 26 32"><g fill="none" stroke="#e4e4e4" stroke-width="2" stroke-linejoin="round" stroke-linecap="round"><path d="M7.5 2H18.5M9.5 2.5V10.5Q4.5 13 4 18H22Q21.5 13 16.5 10.5V2.5"/><path d="M13 18V29"/></g></svg>
<div class="b" style="left:2168px;top:214.5px;width:192px;height:51px;background:#6a7fa7;border-radius:11px;box-shadow:0 1px 3px rgba(0,0,0,0.35), 0 0 0 1px rgba(0,0,0,0.12);"></div>
<svg class="b" style="left:2185px;top:226px;" width="25" height="26" viewBox="0 0 25 26"><g fill="none" stroke="#f4f4f4" stroke-linecap="round"><path d="M6.2 1.2H18.4" stroke-width="1.4"/><path d="M3.6 4.1H21.2" stroke-width="1.7"/><rect x="1.6" y="8" width="21.4" height="16.2" rx="3.4" stroke-width="2"/></g></svg>
<span class="t" style="left:2220.5px;top:225.5px;font-size:23.5px;line-height:30px;color:#fff;letter-spacing:-0.242px;">GalleryView</span>
<div class="b" style="left:2085.5px;top:1756px;width:162px;height:51.5px;background:#393939;border-radius:12px;box-shadow:0 1px 4px rgba(0,0,0,0.4), inset 0 0 0 1px rgba(255,255,255,0.06);"></div>
<div class="b" style="left:2268px;top:1756px;width:63px;height:51.5px;background:#393939;border-radius:12px;box-shadow:0 1px 4px rgba(0,0,0,0.4), inset 0 0 0 1px rgba(255,255,255,0.06);"></div>
<div class="b" style="left:2351px;top:1756px;width:365px;height:51.5px;background:#393939;border-radius:12px;box-shadow:0 1px 4px rgba(0,0,0,0.4), inset 0 0 0 1px rgba(255,255,255,0.06);"></div>
<div class="b" style="left:2792px;top:1756px;width:207px;height:51.5px;background:#393939;border-radius:12px;box-shadow:0 1px 4px rgba(0,0,0,0.4), inset 0 0 0 1px rgba(255,255,255,0.06);"></div>
<svg class="b" style="left:2102.7px;top:1768.8px;" width="26.4" height="26.4" viewBox="0 0 27 27"><circle cx="13.5" cy="13.5" r="13.5" fill="#3478f6"/><path d="M10.4 8.2L18.6 13.5L10.4 18.8Z" fill="#fff" stroke="#fff" stroke-width="1.4" stroke-linejoin="round"/></svg>
<svg class="b" style="left:2151.2px;top:1770px;" width="23.4" height="23.4" viewBox="0 0 26 26"><rect x="1.2" y="1.2" width="23.6" height="23.6" rx="3.5" fill="none" stroke="#ececec" stroke-width="2"/><path d="M9.5 6V19L12.8 16L15 21L17 20.1L14.8 15.2H19Z" fill="#ececec"/></svg>
<svg class="b" style="left:2204.6px;top:1772.5px;" width="23.6" height="19.6" viewBox="0 0 27 23"><rect x="1" y="1" width="5.6" height="8" rx="1" fill="none" stroke="#ececec" stroke-width="1.7"/><rect x="1" y="13" width="5.6" height="8" rx="1" fill="none" stroke="#ececec" stroke-width="1.7"/><rect x="10.3" y="1" width="5.6" height="8" rx="1" fill="none" stroke="#ececec" stroke-width="1.7"/><rect x="10.3" y="13" width="5.6" height="8" rx="1" fill="none" stroke="#ececec" stroke-width="1.7"/><rect x="19.6" y="1" width="5.6" height="8" rx="1" fill="none" stroke="#ececec" stroke-width="1.7"/><rect x="19.6" y="13" width="5.6" height="8" rx="1" fill="none" stroke="#ececec" stroke-width="1.7"/></svg>
<svg class="b" style="left:2287px;top:1769.6px;" width="25" height="24.8" viewBox="0 0 28 27"><rect x="1.2" y="1.2" width="25.6" height="11" rx="5.5" fill="none" stroke="#ececec" stroke-width="2.2"/><circle cx="7.5" cy="6.7" r="3.6" fill="#ececec"/><rect x="0.2" y="14.6" width="27.6" height="12.2" rx="6.1" fill="#ececec"/><circle cx="20.8" cy="20.7" r="3.4" fill="#393939"/></svg>
<svg class="b" style="left:2370px;top:1769px;" width="15" height="26" viewBox="0 0 15 26"><rect x="1.2" y="1.2" width="12.6" height="23.6" rx="3" fill="#5e5e5e" stroke="#ececec" stroke-width="1.9"/><path d="M5.3 3.8H9.7" stroke="#ececec" stroke-width="1.6" stroke-linecap="round"/></svg>
<span class="t" style="left:2397.0px;top:1767.5px;font-size:23.5px;line-height:30px;color:#f2f2f2;letter-spacing:-0.229px;">Automatic – iPhone 15 Pro</span>
<svg class="b" style="left:2683px;top:1776px;" width="17" height="12" viewBox="0 0 17 12"><path d="M2 2.5L8.5 9L15 2.5" fill="none" stroke="#ececec" stroke-width="2.6" stroke-linecap="round" stroke-linejoin="round"/></svg>
<svg class="b" style="left:2810px;top:1769px;" width="27" height="27" viewBox="0 0 28 28"><circle cx="11" cy="11" r="8.8" fill="none" stroke="#ececec" stroke-width="2.4"/><path d="M17.6 17.6L25.5 25.5" stroke="#ececec" stroke-width="3" stroke-linecap="round"/><path d="M7 11H15" stroke="#ececec" stroke-width="2.2" stroke-linecap="round"/></svg>
<svg class="b" style="left:2858px;top:1769px;" width="28" height="28" viewBox="0 0 28 28"><circle cx="11" cy="11" r="8.8" fill="none" stroke="#9a9a9a" stroke-width="2.4"/><path d="M17.6 17.6L25.5 25.5" stroke="#9a9a9a" stroke-width="3" stroke-linecap="round"/><path d="M9.3 8.5L11.5 7V15.5" fill="none" stroke="#9a9a9a" stroke-width="1.8"/></svg>
<svg class="b" style="left:2906.5px;top:1769px;" width="27" height="27" viewBox="0 0 28 28"><circle cx="11" cy="11" r="8.8" fill="none" stroke="#ececec" stroke-width="2.4"/><path d="M17.6 17.6L25.5 25.5" stroke="#ececec" stroke-width="3" stroke-linecap="round"/><rect x="7.2" y="7.2" width="7.6" height="7.6" rx="1.5" fill="none" stroke="#ececec" stroke-width="2"/></svg>
<svg class="b" style="left:2954.5px;top:1769px;" width="27" height="27" viewBox="0 0 28 28"><circle cx="11" cy="11" r="8.8" fill="none" stroke="#ececec" stroke-width="2.4"/><path d="M17.6 17.6L25.5 25.5" stroke="#ececec" stroke-width="3" stroke-linecap="round"/><path d="M7 11H15M11 7V15" stroke="#ececec" stroke-width="2.2" stroke-linecap="round"/></svg>
<!-- p_debug -->
<svg class="b" style="left:568.5px;top:1852px;" width="30" height="18.5" viewBox="0 0 30 18.5"><path d="M3.5 0H21.5Q23.6 0 24.8 1.6L29.2 7.6Q30.2 9.25 29.2 10.9L24.8 16.9Q23.6 18.5 21.5 18.5H3.5Q0 18.5 0 15V3.5Q0 0 3.5 0Z" fill="#3478f6"/></svg>
<div class="b" style="left:613.95px;top:1850px;width:1.5px;height:23px;background:#454547;"></div>
<div class="b" style="left:855.95px;top:1850px;width:1.5px;height:23px;background:#454547;"></div>
<div class="b" style="left:1097.75px;top:1850px;width:1.5px;height:23px;background:#454547;"></div>
<svg class="b" style="left:636.5px;top:1847.5px;" width="19" height="26.5" viewBox="0 0 19 26.5"><g fill="none" stroke="#c4c4c4" stroke-width="1.7"><rect x="1" y="1" width="5" height="24.5" rx="1.2"/><rect x="13" y="1" width="5" height="24.5" rx="1.2"/></g></svg>
<svg class="b" style="left:692.5px;top:1851px;" width="28" height="23" viewBox="0 0 28 23"><g fill="none" stroke="#5c5c5e" stroke-width="1.8" stroke-linejoin="round"><path d="M1 13L13.5 1.5L24.5 12"/><path d="M19 12.5H25V6.5"/><rect x="5.5" y="17.5" width="16" height="4"/></g></svg>
<svg class="b" style="left:756px;top:1848px;" width="20" height="26" viewBox="0 0 20 26"><g fill="none" stroke="#5c5c5e" stroke-width="1.8" stroke-linejoin="round" stroke-linecap="round"><path d="M10 1V17M3.5 11L10 17.5L16.5 11"/><rect x="1.5" y="21" width="17" height="4"/></g></svg>
<svg class="b" style="left:816px;top:1848px;" width="20" height="26" viewBox="0 0 20 26"><g fill="none" stroke="#5c5c5e" stroke-width="1.8" stroke-linejoin="round" stroke-linecap="round"><path d="M10 17.5V1.5M3.5 8L10 1.5L16.5 8"/><rect x="1.5" y="21" width="17" height="4"/></g></svg>
<svg class="b" style="left:875.5px;top:1848px;" width="25" height="27" viewBox="0 0 25 27"><g fill="none" stroke="#b0b0b0" stroke-width="1.9" stroke-linejoin="round"><path d="M10.5 9.5L22.5 4.5V20.5L10.5 25.5Z"/><path d="M6 7L18 2M6 7V23L10.5 25"/><path d="M1.5 5L13.5 0.8M1.5 5V20.5L6 22.5"/></g></svg>
<svg class="b" style="left:934px;top:1848px;" width="28" height="27" viewBox="0 0 28 27"><g fill="none" stroke="#b0b0b0" stroke-width="2"><circle cx="5.5" cy="5.5" r="4.2"/><circle cx="5.5" cy="21.5" r="4.2"/><circle cx="22" cy="13.5" r="4.2"/><path d="M9.3 7.4L18.2 11.7M9.3 19.6L18.2 15.3"/></g></svg>
<svg class="b" style="left:996.5px;top:1848.5px;" width="23" height="26" viewBox="0 0 23 26"><rect x="1.1" y="1.1" width="20.8" height="10.3" rx="5.15" fill="none" stroke="#b0b0b0" stroke-width="2"/><circle cx="6.6" cy="6.3" r="3" fill="#b0b0b0"/><rect x="1.1" y="14.6" width="20.8" height="10.3" rx="5.15" fill="none" stroke="#b0b0b0" stroke-width="2"/><circle cx="16.4" cy="19.8" r="3" fill="#b0b0b0"/></svg>
<svg class="b" style="left:1055px;top:1848px;" width="27" height="27" viewBox="0 0 27 27"><path d="M25 2L1.8 11.8H12.8Q15 11.8 15 14V25.2Z" fill="none" stroke="#b0b0b0" stroke-width="2" stroke-linejoin="round"/></svg>
<svg class="b" style="left:1118px;top:1849px;" width="23" height="23" viewBox="0 0 23 23"><rect x="0" y="0" width="23" height="23" rx="5" fill="#8a8a8c"/><g stroke="#1f1f21" stroke-width="1.9" stroke-linecap="round" fill="none"><path d="M10.2 6.2L15 14.8M12.8 6.2L8 14.8M6.2 12.6H16.8"/></g></svg>
<span class="t" style="left:1154.7px;top:1846.2px;font-size:23.5px;line-height:30px;color:#ececec;letter-spacing:-0.365px;">Landmarks</span>
<span class="t" style="left:2775.0px;top:1846.0px;font-size:23px;line-height:30px;color:#9b9b9b;letter-spacing:-0.340px;font-weight:700;">Line: 16  Col: 1</span>
<div class="b" style="left:2954px;top:1853px;width:1.5px;height:20px;background:#454547;"></div>
<svg class="b" style="left:2973px;top:1848px;" width="26" height="26" viewBox="0 0 26 26"><rect x="1.2" y="1.2" width="23.6" height="23.6" rx="4.5" fill="none" stroke="#a8a8a8" stroke-width="2.1"/><rect x="5" y="15.5" width="16" height="5.8" rx="2" fill="#a8a8a8"/></svg>
</div></div></body></html>
